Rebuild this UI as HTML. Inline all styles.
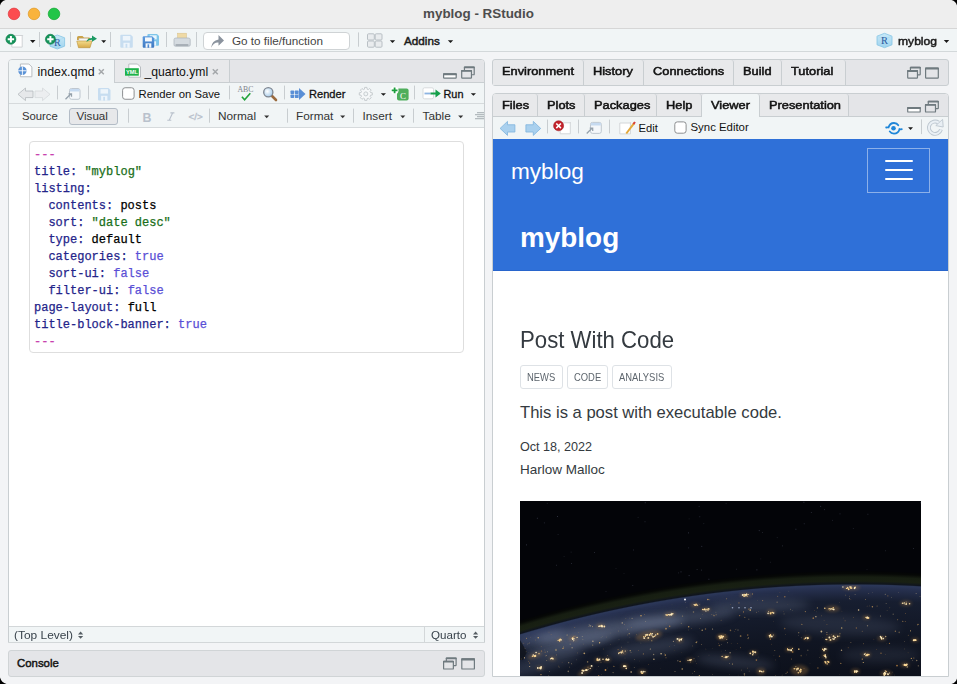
<!DOCTYPE html>
<html><head><meta charset="utf-8">
<style>
*{margin:0;padding:0;box-sizing:border-box}
html,body{width:957px;height:684px;overflow:hidden;background:#f3f4f6;font-family:"Liberation Sans",sans-serif;color:#222}
.a{position:absolute}
.t{position:absolute;white-space:nowrap;line-height:1}
</style></head><body>
<div class="a" style="left:0px;top:0px;width:957px;height:29px;background:#eeeeee;border-bottom:1px solid #d6d6d6"></div>
<div class="t" style="left:0px;top:7px;font-size:13.4px;color:#4d4d4d;font-weight:bold;width:957px;text-align:center">myblog - RStudio</div>
<div class="a" style="left:0px;top:29px;width:957px;height:23px;background:#f1f5f6;border-bottom:1px solid #d3d8da"></div>
<div class="a" style="left:203px;top:32px;width:147px;height:18px;background:#fff;border:1px solid #cfd3d5;border-radius:4px"></div>
<div class="t" style="left:232px;top:35px;font-size:11.7px;color:#444;">Go to file/function</div>
<div class="t" style="left:404px;top:34.5px;font-size:11.7px;color:#1a1a1a;-webkit-text-stroke:0.45px #1a1a1a">Addins</div>
<div class="t" style="left:897.5px;top:36px;font-size:11px;color:#1a1a1a;-webkit-text-stroke:0.45px #1a1a1a;transform:scaleX(1.1);transform-origin:0 0">myblog</div>
<div class="a" style="left:8px;top:59px;width:477px;height:584px;background:#fff;border:1px solid #c9ced1;border-radius:4px 4px 0 0"></div>
<div class="a" style="left:9px;top:60px;width:475px;height:23px;background:#e4e5e8;border-bottom:1px solid #c9ced1;border-radius:3px 3px 0 0"></div>
<div class="a" style="left:9px;top:60px;width:106px;height:23px;background:#f1f5f6;border-right:1px solid #c9ced1;border-radius:3px 0 0 0"></div>
<div class="a" style="left:115px;top:60px;width:115px;height:22px;background:#e8e9eb;border-right:1px solid #c9ced1"></div>
<div class="t" style="left:37.5px;top:65.5px;font-size:12.4px;color:#111;">index.qmd</div>
<div class="t" style="left:144.5px;top:65.5px;font-size:12.2px;color:#111;">_quarto.yml</div>
<div class="a" style="left:9px;top:83px;width:475px;height:21px;background:#f1f5f6;border-bottom:1px solid #d6dadc"></div>
<div class="t" style="left:138.5px;top:88.5px;font-size:11.3px;color:#111;">Render on Save</div>
<div class="t" style="left:309px;top:88.5px;font-size:11.1px;color:#111;-webkit-text-stroke:0.3px #111">Render</div>
<div class="t" style="left:443.5px;top:88.5px;font-size:10.9px;color:#111;-webkit-text-stroke:0.3px #111">Run</div>
<div class="a" style="left:9px;top:104px;width:475px;height:24px;background:#f1f5f6;border-bottom:1px solid #d6dadc"></div>
<div class="t" style="left:22px;top:110.5px;font-size:11.3px;color:#333;">Source</div>
<div class="a" style="left:69px;top:108px;width:49px;height:17px;background:#e7e8ea;border:1px solid #b3bcc6;border-radius:3px"></div>
<div class="t" style="left:76.5px;top:110px;font-size:11.6px;color:#333;">Visual</div>
<div class="t" style="left:218px;top:111px;font-size:11.8px;color:#333;">Normal</div>
<div class="t" style="left:296px;top:111px;font-size:11.8px;color:#333;">Format</div>
<div class="t" style="left:362.5px;top:111px;font-size:11.8px;color:#333;">Insert</div>
<div class="t" style="left:422.5px;top:111px;font-size:11.8px;color:#333;">Table</div>
<div class="t" style="left:142.5px;top:111.5px;font-size:12.4px;color:#b9c1cc;font-weight:bold;">B</div>
<div class="t" style="left:188.5px;top:112px;font-size:9.8px;color:#b9c1cc;-webkit-text-stroke:0.35px #b9c1cc">&lt;/&gt;</div>
<div class="a" style="left:29px;top:141px;width:435px;height:212px;border:1px solid #dedede;border-radius:4px;background:#fff"></div>
<pre class="a" style="left:34px;top:146.5px;font-family:'Liberation Mono',monospace;font-size:12px;line-height:17px;color:#24248a;-webkit-text-stroke:0.25px"><span style="color:#c83fae">---</span>
title: <span style="color:#1a6f1a">"myblog"</span>
listing:
  contents: <span style="color:#000">posts</span>
  sort: <span style="color:#1a6f1a">"date desc"</span>
  type: <span style="color:#000">default</span>
  categories: <span style="color:#5a4fd6">true</span>
  sort-ui: <span style="color:#5a4fd6">false</span>
  filter-ui: <span style="color:#5a4fd6">false</span>
page-layout: <span style="color:#000">full</span>
title-block-banner: <span style="color:#5a4fd6">true</span>
<span style="color:#c83fae">---</span></pre>
<div class="a" style="left:9px;top:626px;width:475px;height:17px;background:#f1f5f6;border-top:1px solid #d3d7d9;border-bottom:1px solid #d3d7d9"></div>
<div class="a" style="left:424px;top:627px;width:1px;height:15px;background:#d3d7d9"></div>
<div class="t" style="left:14px;top:629.8px;font-size:11.1px;color:#39434c;transform:scaleX(1.075);transform-origin:0 0">(Top Level)</div>
<div class="t" style="left:431px;top:630.3px;font-size:10.9px;color:#39434c;transform:scaleX(1.065);transform-origin:0 0">Quarto</div>
<div class="a" style="left:8px;top:650px;width:477px;height:27px;background:#e4e5e8;border:1px solid #d0d4d6;border-radius:3px"></div>
<div class="t" style="left:17px;top:658px;font-size:11.4px;color:#111;-webkit-text-stroke:0.45px #111">Console</div>
<div class="a" style="left:492px;top:59px;width:457px;height:27px;background:#e4e5e8;border:1px solid #c9ced1;border-radius:3px"></div>
<div class="a" style="left:493px;top:60px;width:91px;height:25px;background:#e8e9eb;border-right:1px solid #c9ced1;border-radius:3px 3px 0 0"></div>
<div class="t" style="left:502px;top:65.5px;font-size:11.3px;color:#111;-webkit-text-stroke:0.5px #111;transform:scaleX(1.135);transform-origin:0 0">Environment</div>
<div class="a" style="left:584px;top:60px;width:60px;height:25px;background:#e8e9eb;border-right:1px solid #c9ced1;border-radius:3px 3px 0 0"></div>
<div class="t" style="left:593px;top:65.5px;font-size:11.3px;color:#111;-webkit-text-stroke:0.5px #111;transform:scaleX(1.135);transform-origin:0 0">History</div>
<div class="a" style="left:644px;top:60px;width:90px;height:25px;background:#e8e9eb;border-right:1px solid #c9ced1;border-radius:3px 3px 0 0"></div>
<div class="t" style="left:653px;top:65.5px;font-size:11.3px;color:#111;-webkit-text-stroke:0.5px #111;transform:scaleX(1.135);transform-origin:0 0">Connections</div>
<div class="a" style="left:734px;top:60px;width:48px;height:25px;background:#e8e9eb;border-right:1px solid #c9ced1;border-radius:3px 3px 0 0"></div>
<div class="t" style="left:743px;top:65.5px;font-size:11.3px;color:#111;-webkit-text-stroke:0.5px #111;transform:scaleX(1.135);transform-origin:0 0">Build</div>
<div class="a" style="left:782px;top:60px;width:64px;height:25px;background:#e8e9eb;border-right:1px solid #c9ced1;border-radius:3px 3px 0 0"></div>
<div class="t" style="left:791px;top:65.5px;font-size:11.3px;color:#111;-webkit-text-stroke:0.5px #111;transform:scaleX(1.135);transform-origin:0 0">Tutorial</div>
<div class="a" style="left:492px;top:93px;width:457px;height:584px;background:#fff;border:1px solid #c9ced1;border-radius:4px 4px 0 0;overflow:hidden"></div>
<div class="a" style="left:493px;top:94px;width:455px;height:23px;background:#e4e5e8;border-bottom:1px solid #c9ced1;border-radius:3px 3px 0 0"></div>
<div class="a" style="left:493px;top:94px;width:45px;height:22px;background:#e8e9eb;border-right:1px solid #c9ced1;border-radius:3px 3px 0 0"></div>
<div class="t" style="left:502px;top:99.5px;font-size:11.3px;color:#111;-webkit-text-stroke:0.5px #111;transform:scaleX(1.135);transform-origin:0 0">Files</div>
<div class="a" style="left:538px;top:94px;width:47px;height:22px;background:#e8e9eb;border-right:1px solid #c9ced1;border-radius:3px 3px 0 0"></div>
<div class="t" style="left:547px;top:99.5px;font-size:11.3px;color:#111;-webkit-text-stroke:0.5px #111;transform:scaleX(1.135);transform-origin:0 0">Plots</div>
<div class="a" style="left:585px;top:94px;width:72px;height:22px;background:#e8e9eb;border-right:1px solid #c9ced1;border-radius:3px 3px 0 0"></div>
<div class="t" style="left:594px;top:99.5px;font-size:11.3px;color:#111;-webkit-text-stroke:0.5px #111;transform:scaleX(1.135);transform-origin:0 0">Packages</div>
<div class="a" style="left:657px;top:94px;width:45px;height:22px;background:#e8e9eb;border-right:1px solid #c9ced1;border-radius:3px 3px 0 0"></div>
<div class="t" style="left:666px;top:99.5px;font-size:11.3px;color:#111;-webkit-text-stroke:0.5px #111;transform:scaleX(1.135);transform-origin:0 0">Help</div>
<div class="a" style="left:702px;top:94px;width:58px;height:23px;background:#f1f5f6;border-right:1px solid #c9ced1;border-radius:3px 3px 0 0"></div>
<div class="t" style="left:711px;top:99.5px;font-size:11.3px;color:#111;-webkit-text-stroke:0.5px #111;transform:scaleX(1.135);transform-origin:0 0">Viewer</div>
<div class="a" style="left:760px;top:94px;width:89px;height:22px;background:#e8e9eb;border-right:1px solid #c9ced1;border-radius:3px 3px 0 0"></div>
<div class="t" style="left:769px;top:99.5px;font-size:11.3px;color:#111;-webkit-text-stroke:0.5px #111;transform:scaleX(1.135);transform-origin:0 0">Presentation</div>
<div class="a" style="left:493px;top:117px;width:455px;height:22px;background:#f1f5f6"></div>
<div class="t" style="left:638.5px;top:122.5px;font-size:11.2px;color:#111;">Edit</div>
<div class="t" style="left:690.5px;top:122px;font-size:11.4px;color:#111;">Sync Editor</div>
<div class="a" style="left:493px;top:139px;width:455px;height:132px;background:#2f70d8;border-bottom:1px solid #2865cc"></div>
<div class="t" style="left:511px;top:160.5px;font-size:22.6px;color:#fff;">myblog</div>
<div class="a" style="left:867px;top:148px;width:63px;height:45px;border:1px solid rgba(255,255,255,0.45)"></div>
<div class="a" style="left:885px;top:160.2px;width:28px;height:2.2px;background:#fff;border-radius:1px"></div>
<div class="a" style="left:885px;top:169.2px;width:28px;height:2.2px;background:#fff;border-radius:1px"></div>
<div class="a" style="left:885px;top:178.2px;width:28px;height:2.2px;background:#fff;border-radius:1px"></div>
<div class="t" style="left:520px;top:224px;font-size:27.9px;color:#fff;font-weight:bold;">myblog</div>
<div class="t" style="left:520px;top:328.8px;font-size:23.6px;color:#343a40;transform:scaleX(0.94);transform-origin:0 0">Post With Code</div>
<div class="a" style="left:520px;top:365px;width:43px;height:24px;border:1px solid #dee2e6;border-radius:3px"></div>
<div class="a" style="left:567px;top:365px;width:41px;height:24px;border:1px solid #dee2e6;border-radius:3px"></div>
<div class="a" style="left:612px;top:365px;width:60px;height:24px;border:1px solid #dee2e6;border-radius:3px"></div>
<div class="t" style="left:527px;top:372px;font-size:11.2px;color:#5d656d;transform:scaleX(0.84);transform-origin:0 0">NEWS</div>
<div class="t" style="left:574px;top:372px;font-size:11.2px;color:#5d656d;transform:scaleX(0.84);transform-origin:0 0">CODE</div>
<div class="t" style="left:619px;top:372px;font-size:11.2px;color:#5d656d;transform:scaleX(0.84);transform-origin:0 0">ANALYSIS</div>
<div class="t" style="left:520px;top:405px;font-size:16.6px;color:#343a40;">This is a post with executable code.</div>
<div class="t" style="left:520px;top:440.5px;font-size:12.6px;color:#343a40;">Oct 18, 2022</div>
<div class="t" style="left:520px;top:462.5px;font-size:13.5px;color:#343a40;">Harlow Malloc</div>
<svg class="a" style="left:520px;top:501px" width="401" height="175" viewBox="520 501 401 175">
<defs>
<radialGradient id="glow" cx="854.6" cy="1731" r="1160" gradientUnits="userSpaceOnUse"><stop offset="0.9827586206896551" stop-color="#1c2336"/><stop offset="0.9879310344827587" stop-color="#2a3654"/><stop offset="0.9889655172413794" stop-color="#0f141e"/><stop offset="0.9913793103448276" stop-color="#192013"/><stop offset="0.9948275862068966" stop-color="#171e12"/><stop offset="0.9978448275862069" stop-color="#060806"/><stop offset="1" stop-color="#030406"/></radialGradient>
<radialGradient id="earth" cx="854.6" cy="1731" r="1146" gradientUnits="userSpaceOnUse"><stop offset="0.8987783595113438" stop-color="#0a0d16"/><stop offset="0.9511343804537522" stop-color="#101522"/><stop offset="0.9860383944153578" stop-color="#171e30"/><stop offset="0.9973821989528796" stop-color="#273150"/><stop offset="1" stop-color="#2c385a"/></radialGradient>
<filter id="b1" x="-50%" y="-50%" width="200%" height="200%"><feGaussianBlur stdDeviation="0.7"/></filter>
<filter id="b2" x="-50%" y="-50%" width="200%" height="200%"><feGaussianBlur stdDeviation="1.6"/></filter>
<filter id="b4" x="-50%" y="-50%" width="200%" height="200%"><feGaussianBlur stdDeviation="4"/></filter>
<clipPath id="ec"><circle cx="854.6" cy="1731" r="1146"/></clipPath>
</defs>
<rect x="520" y="501" width="401" height="175" fill="#030408"/>
<rect x="701.4" y="545.9" width="0.8" height="0.8" fill="#44475a"/>
<rect x="701.2" y="569.7" width="0.8" height="0.8" fill="#353845"/>
<rect x="594.0" y="552.2" width="0.8" height="0.8" fill="#353845"/>
<rect x="557.7" y="534.1" width="0.8" height="0.8" fill="#2a2c36"/>
<rect x="736.0" y="568.8" width="0.8" height="0.8" fill="#2a2c36"/>
<rect x="758.8" y="530.3" width="0.8" height="0.8" fill="#44475a"/>
<rect x="782.2" y="545.5" width="0.8" height="0.8" fill="#353845"/>
<rect x="769.9" y="561.8" width="0.8" height="0.8" fill="#2a2c36"/>
<rect x="543.9" y="522.5" width="0.8" height="0.8" fill="#353845"/>
<rect x="760.4" y="558.5" width="0.8" height="0.8" fill="#22242c"/>
<rect x="696.7" y="569.2" width="0.8" height="0.8" fill="#353845"/>
<rect x="776.8" y="537.3" width="0.8" height="0.8" fill="#2a2c36"/>
<rect x="703.4" y="523.3" width="0.8" height="0.8" fill="#2a2c36"/>
<rect x="803.8" y="523.4" width="0.8" height="0.8" fill="#353845"/>
<rect x="725.7" y="503.3" width="0.8" height="0.8" fill="#2a2c36"/>
<rect x="680.6" y="571.5" width="0.8" height="0.8" fill="#44475a"/>
<rect x="546.8" y="502.9" width="0.8" height="0.8" fill="#2a2c36"/>
<rect x="605.6" y="591.3" width="0.8" height="0.8" fill="#2a2c36"/>
<rect x="708.5" y="578.8" width="0.8" height="0.8" fill="#44475a"/>
<rect x="688.3" y="547.5" width="0.8" height="0.8" fill="#353845"/>
<rect x="832.2" y="519.9" width="0.8" height="0.8" fill="#2a2c36"/>
<rect x="644.8" y="502.4" width="0.8" height="0.8" fill="#44475a"/>
<rect x="824.0" y="509.3" width="0.8" height="0.8" fill="#353845"/>
<rect x="803.5" y="501.8" width="0.8" height="0.8" fill="#44475a"/>
<rect x="839.6" y="513.5" width="0.8" height="0.8" fill="#353845"/>
<rect x="699.4" y="516.4" width="0.8" height="0.8" fill="#353845"/>
<rect x="688.1" y="532.5" width="0.8" height="0.8" fill="#44475a"/>
<rect x="688.7" y="518.5" width="0.8" height="0.8" fill="#22242c"/>
<rect x="866.6" y="569.3" width="0.8" height="0.8" fill="#22242c"/>
<rect x="920.2" y="502.4" width="0.8" height="0.8" fill="#353845"/>
<rect x="678.1" y="572.5" width="0.8" height="0.8" fill="#2a2c36"/>
<rect x="536.9" y="517.8" width="0.8" height="0.8" fill="#44475a"/>
<rect x="623.6" y="573.3" width="0.8" height="0.8" fill="#22242c"/>
<rect x="852.9" y="528.0" width="0.8" height="0.8" fill="#2a2c36"/>
<rect x="556.1" y="564.8" width="0.8" height="0.8" fill="#353845"/>
<rect x="526.2" y="544.5" width="0.8" height="0.8" fill="#44475a"/>
<rect x="571.0" y="563.0" width="0.8" height="0.8" fill="#353845"/>
<rect x="867.5" y="513.8" width="0.8" height="0.8" fill="#353845"/>
<rect x="644.6" y="521.4" width="0.8" height="0.8" fill="#353845"/>
<rect x="810.9" y="512.2" width="0.8" height="0.8" fill="#353845"/>
<rect x="795.5" y="528.8" width="0.8" height="0.8" fill="#44475a"/>
<rect x="762.0" y="532.1" width="0.8" height="0.8" fill="#2a2c36"/>
<rect x="563.7" y="556.1" width="0.8" height="0.8" fill="#22242c"/>
<rect x="615.6" y="568.1" width="0.8" height="0.8" fill="#22242c"/>
<rect x="688.7" y="575.3" width="0.8" height="0.8" fill="#44475a"/>
<rect x="637.7" y="516.9" width="0.8" height="0.8" fill="#2a2c36"/>
<rect x="570.7" y="551.7" width="0.8" height="0.8" fill="#2a2c36"/>
<rect x="632.4" y="585.2" width="0.8" height="0.8" fill="#353845"/>
<rect x="820.3" y="505.9" width="0.8" height="0.8" fill="#44475a"/>
<rect x="698.7" y="505.9" width="0.8" height="0.8" fill="#353845"/>
<rect x="633.1" y="549.6" width="0.8" height="0.8" fill="#353845"/>
<rect x="557.0" y="516.1" width="0.8" height="0.8" fill="#44475a"/>
<rect x="913.2" y="548.0" width="0.8" height="0.8" fill="#353845"/>
<rect x="756.5" y="569.5" width="0.8" height="0.8" fill="#44475a"/>
<rect x="885.0" y="550.4" width="0.8" height="0.8" fill="#2a2c36"/>
<circle cx="854.6" cy="1731" r="1160" fill="url(#glow)"/>
<circle cx="854.6" cy="1731" r="1146" fill="url(#earth)"/>
<g clip-path="url(#ec)">
<ellipse cx="610" cy="630" rx="75" ry="8" fill="#8390ae" opacity="0.45" filter="url(#b4)" transform="rotate(-8.0 610 630)"/>
<ellipse cx="570" cy="645" rx="45" ry="6" fill="#8390ae" opacity="0.4" filter="url(#b4)" transform="rotate(-11.5 570 645)"/>
<ellipse cx="680" cy="618" rx="55" ry="7" fill="#8390ae" opacity="0.3" filter="url(#b4)" transform="rotate(-5.7 680 618)"/>
<ellipse cx="760" cy="606" rx="50" ry="6" fill="#8390ae" opacity="0.25" filter="url(#b4)" transform="rotate(-1.7 760 606)"/>
<ellipse cx="650" cy="648" rx="45" ry="8" fill="#8390ae" opacity="0.22" filter="url(#b4)" transform="rotate(-8.6 650 648)"/>
<ellipse cx="840" cy="625" rx="60" ry="10" fill="#8390ae" opacity="0.15" filter="url(#b4)" transform="rotate(2.9 840 625)"/>
<ellipse cx="735" cy="662" rx="40" ry="6" fill="#8390ae" opacity="0.22" filter="url(#b4)" transform="rotate(5.7 735 662)"/>
<ellipse cx="545" cy="662" rx="40" ry="8" fill="#8390ae" opacity="0.2" filter="url(#b4)" transform="rotate(-17.2 545 662)"/>
<ellipse cx="880" cy="655" rx="40" ry="8" fill="#8390ae" opacity="0.12" filter="url(#b4)" transform="rotate(0.0 880 655)"/>
<ellipse cx="540" cy="638" rx="25" ry="5" fill="#8390ae" opacity="0.35" filter="url(#b4)" transform="rotate(-14.3 540 638)"/>
<circle cx="528.5" cy="661.6" r="0.44" fill="#d9974a" opacity="0.69"/>
<circle cx="574.8" cy="627.5" r="0.42" fill="#e8b060" opacity="0.47"/>
<circle cx="881.0" cy="653.2" r="0.60" fill="#d9974a" opacity="0.73"/>
<circle cx="661.1" cy="653.8" r="0.79" fill="#ffdca0" opacity="0.77"/>
<circle cx="898.6" cy="592.5" r="0.45" fill="#ffdca0" opacity="0.26"/>
<circle cx="672.0" cy="604.5" r="0.30" fill="#e8b060" opacity="0.30"/>
<circle cx="918.3" cy="665.8" r="0.62" fill="#ffdca0" opacity="0.48"/>
<circle cx="696.6" cy="663.7" r="0.30" fill="#e8b060" opacity="0.70"/>
<circle cx="644.4" cy="614.4" r="0.30" fill="#e8b060" opacity="0.82"/>
<circle cx="719.4" cy="645.5" r="0.81" fill="#e8b060" opacity="0.40"/>
<circle cx="667.5" cy="614.6" r="0.52" fill="#d9974a" opacity="0.56"/>
<circle cx="784.7" cy="628.6" r="0.78" fill="#d9974a" opacity="0.45"/>
<circle cx="599.6" cy="642.8" r="0.69" fill="#f2c77a" opacity="0.80"/>
<circle cx="674.2" cy="645.7" r="0.36" fill="#ffdca0" opacity="0.33"/>
<circle cx="660.6" cy="668.6" r="0.30" fill="#d9974a" opacity="0.29"/>
<circle cx="849.6" cy="598.8" r="0.43" fill="#ffdca0" opacity="0.81"/>
<circle cx="673.4" cy="641.2" r="0.57" fill="#ffdca0" opacity="0.68"/>
<circle cx="648.5" cy="664.3" r="0.35" fill="#d9974a" opacity="0.61"/>
<circle cx="748.8" cy="619.3" r="0.68" fill="#f2c77a" opacity="0.26"/>
<circle cx="682.5" cy="616.1" r="0.66" fill="#f2c77a" opacity="0.41"/>
<circle cx="839.5" cy="674.6" r="0.31" fill="#d9974a" opacity="0.32"/>
<circle cx="904.3" cy="648.9" r="0.32" fill="#f2c77a" opacity="0.54"/>
<circle cx="806.4" cy="654.9" r="0.47" fill="#f2c77a" opacity="0.27"/>
<circle cx="629.2" cy="633.7" r="0.59" fill="#f2c77a" opacity="0.56"/>
<circle cx="677.8" cy="660.8" r="0.79" fill="#ffdca0" opacity="0.30"/>
<circle cx="572.1" cy="647.8" r="0.53" fill="#ffdca0" opacity="0.80"/>
<circle cx="740.6" cy="647.8" r="0.45" fill="#d9974a" opacity="0.74"/>
<circle cx="705.9" cy="649.0" r="0.33" fill="#e8b060" opacity="0.68"/>
<circle cx="605.5" cy="670.0" r="0.88" fill="#d9974a" opacity="0.84"/>
<circle cx="625.0" cy="658.0" r="0.30" fill="#e8b060" opacity="0.55"/>
<circle cx="696.8" cy="641.8" r="0.65" fill="#e8b060" opacity="0.54"/>
<circle cx="607.5" cy="668.0" r="0.41" fill="#d9974a" opacity="0.27"/>
<circle cx="795.3" cy="668.8" r="0.43" fill="#ffdca0" opacity="0.85"/>
<circle cx="899.2" cy="632.3" r="0.84" fill="#f2c77a" opacity="0.30"/>
<circle cx="696.2" cy="642.5" r="0.71" fill="#f2c77a" opacity="0.59"/>
<circle cx="729.6" cy="663.5" r="0.49" fill="#ffdca0" opacity="0.44"/>
<circle cx="902.9" cy="664.8" r="0.52" fill="#f2c77a" opacity="0.43"/>
<circle cx="908.3" cy="635.2" r="0.50" fill="#e8b060" opacity="0.37"/>
<circle cx="721.8" cy="644.7" r="0.30" fill="#ffdca0" opacity="0.83"/>
<circle cx="738.1" cy="675.1" r="0.31" fill="#f2c77a" opacity="0.31"/>
<circle cx="546.4" cy="655.3" r="0.40" fill="#ffdca0" opacity="0.82"/>
<circle cx="628.0" cy="642.1" r="0.31" fill="#ffdca0" opacity="0.51"/>
<circle cx="730.5" cy="604.5" r="0.41" fill="#d9974a" opacity="0.27"/>
<circle cx="571.9" cy="664.6" r="0.30" fill="#f2c77a" opacity="0.37"/>
<circle cx="524.7" cy="648.4" r="0.61" fill="#ffdca0" opacity="0.40"/>
<circle cx="562.1" cy="662.8" r="0.31" fill="#d9974a" opacity="0.56"/>
<circle cx="807.8" cy="650.3" r="0.76" fill="#ffdca0" opacity="0.26"/>
<circle cx="850.9" cy="642.6" r="0.47" fill="#f2c77a" opacity="0.77"/>
<circle cx="732.4" cy="664.0" r="0.52" fill="#f2c77a" opacity="0.76"/>
<circle cx="886.8" cy="643.8" r="0.37" fill="#d9974a" opacity="0.36"/>
<circle cx="877.1" cy="606.1" r="0.66" fill="#e8b060" opacity="0.37"/>
<circle cx="573.7" cy="636.4" r="0.62" fill="#e8b060" opacity="0.41"/>
<circle cx="694.4" cy="671.5" r="0.48" fill="#f2c77a" opacity="0.67"/>
<circle cx="681.5" cy="652.8" r="0.30" fill="#d9974a" opacity="0.37"/>
<circle cx="885.5" cy="673.3" r="0.31" fill="#d9974a" opacity="0.55"/>
<circle cx="721.6" cy="651.1" r="0.32" fill="#e8b060" opacity="0.29"/>
<circle cx="529.7" cy="666.5" r="0.53" fill="#ffdca0" opacity="0.79"/>
<circle cx="578.8" cy="632.5" r="0.32" fill="#d9974a" opacity="0.75"/>
<circle cx="891.7" cy="597.8" r="0.30" fill="#ffdca0" opacity="0.82"/>
<circle cx="551.1" cy="634.4" r="0.39" fill="#d9974a" opacity="0.51"/>
<circle cx="692.5" cy="645.9" r="0.30" fill="#f2c77a" opacity="0.67"/>
<circle cx="592.7" cy="645.1" r="0.63" fill="#f2c77a" opacity="0.49"/>
<circle cx="762.6" cy="600.6" r="0.68" fill="#e8b060" opacity="0.44"/>
<circle cx="841.5" cy="650.3" r="0.74" fill="#ffdca0" opacity="0.63"/>
<circle cx="748.4" cy="609.6" r="0.51" fill="#d9974a" opacity="0.45"/>
<circle cx="632.1" cy="618.4" r="0.63" fill="#ffdca0" opacity="0.35"/>
<circle cx="573.4" cy="641.2" r="0.47" fill="#ffdca0" opacity="0.47"/>
<circle cx="826.9" cy="624.5" r="0.61" fill="#d9974a" opacity="0.29"/>
<circle cx="641.0" cy="615.8" r="0.77" fill="#e8b060" opacity="0.84"/>
<circle cx="613.1" cy="672.6" r="0.57" fill="#ffdca0" opacity="0.45"/>
<circle cx="748.4" cy="637.7" r="0.39" fill="#f2c77a" opacity="0.85"/>
<circle cx="801.2" cy="655.6" r="0.88" fill="#e8b060" opacity="0.26"/>
<circle cx="816.3" cy="611.8" r="0.40" fill="#f2c77a" opacity="0.28"/>
<circle cx="779.9" cy="592.4" r="0.34" fill="#d9974a" opacity="0.42"/>
<circle cx="740.6" cy="636.0" r="0.86" fill="#e8b060" opacity="0.59"/>
<circle cx="775.8" cy="659.9" r="0.30" fill="#e8b060" opacity="0.61"/>
<circle cx="675.0" cy="671.5" r="0.39" fill="#ffdca0" opacity="0.83"/>
<circle cx="737.3" cy="643.3" r="0.41" fill="#d9974a" opacity="0.55"/>
<circle cx="731.2" cy="643.7" r="0.38" fill="#d9974a" opacity="0.42"/>
<circle cx="744.8" cy="617.4" r="0.61" fill="#e8b060" opacity="0.43"/>
<circle cx="829.8" cy="640.1" r="0.54" fill="#ffdca0" opacity="0.50"/>
<circle cx="541.2" cy="646.3" r="0.39" fill="#d9974a" opacity="0.60"/>
<circle cx="549.5" cy="671.7" r="0.41" fill="#f2c77a" opacity="0.54"/>
<circle cx="538.2" cy="637.7" r="0.69" fill="#f2c77a" opacity="0.80"/>
<circle cx="912.5" cy="660.3" r="0.52" fill="#ffdca0" opacity="0.32"/>
<circle cx="702.7" cy="614.8" r="0.30" fill="#e8b060" opacity="0.57"/>
<circle cx="665.7" cy="614.6" r="0.40" fill="#ffdca0" opacity="0.61"/>
<circle cx="666.0" cy="657.7" r="0.70" fill="#d9974a" opacity="0.33"/>
<circle cx="814.4" cy="610.3" r="0.31" fill="#d9974a" opacity="0.79"/>
<circle cx="630.2" cy="650.7" r="0.62" fill="#f2c77a" opacity="0.67"/>
<circle cx="773.9" cy="655.2" r="0.32" fill="#f2c77a" opacity="0.40"/>
<circle cx="872.4" cy="592.6" r="0.30" fill="#ffdca0" opacity="0.41"/>
<circle cx="530.8" cy="637.2" r="0.33" fill="#e8b060" opacity="0.42"/>
<circle cx="886.1" cy="603.4" r="0.33" fill="#ffdca0" opacity="0.84"/>
<circle cx="711.9" cy="614.4" r="0.37" fill="#e8b060" opacity="0.70"/>
<circle cx="841.7" cy="628.0" r="0.71" fill="#f2c77a" opacity="0.75"/>
<circle cx="698.2" cy="656.7" r="0.39" fill="#f2c77a" opacity="0.34"/>
<circle cx="782.1" cy="675.1" r="0.36" fill="#f2c77a" opacity="0.58"/>
<circle cx="691.5" cy="628.5" r="0.31" fill="#e8b060" opacity="0.78"/>
<circle cx="738.0" cy="630.0" r="0.49" fill="#ffdca0" opacity="0.74"/>
<circle cx="639.8" cy="661.0" r="0.30" fill="#e8b060" opacity="0.38"/>
<circle cx="798.7" cy="632.7" r="0.65" fill="#f2c77a" opacity="0.45"/>
<circle cx="607.7" cy="655.4" r="0.36" fill="#d9974a" opacity="0.79"/>
<circle cx="804.4" cy="639.0" r="0.81" fill="#d9974a" opacity="0.81"/>
<circle cx="695.6" cy="661.0" r="0.36" fill="#ffdca0" opacity="0.44"/>
<circle cx="908.1" cy="652.8" r="0.46" fill="#d9974a" opacity="0.30"/>
<circle cx="529.7" cy="663.1" r="0.51" fill="#d9974a" opacity="0.73"/>
<circle cx="839.6" cy="636.1" r="0.72" fill="#f2c77a" opacity="0.59"/>
<circle cx="556.0" cy="650.1" r="0.74" fill="#f2c77a" opacity="0.74"/>
<circle cx="726.8" cy="639.6" r="0.49" fill="#ffdca0" opacity="0.83"/>
<circle cx="545.7" cy="655.8" r="0.67" fill="#e8b060" opacity="0.30"/>
<circle cx="629.7" cy="618.1" r="0.36" fill="#f2c77a" opacity="0.27"/>
<circle cx="559.1" cy="667.1" r="0.41" fill="#ffdca0" opacity="0.68"/>
<circle cx="826.9" cy="634.5" r="0.65" fill="#d9974a" opacity="0.49"/>
<circle cx="843.7" cy="618.0" r="0.31" fill="#e8b060" opacity="0.54"/>
<circle cx="804.0" cy="668.7" r="0.40" fill="#d9974a" opacity="0.75"/>
<circle cx="862.3" cy="659.1" r="0.72" fill="#e8b060" opacity="0.78"/>
<circle cx="730.1" cy="652.7" r="0.69" fill="#ffdca0" opacity="0.50"/>
<circle cx="887.1" cy="610.7" r="0.32" fill="#f2c77a" opacity="0.63"/>
<circle cx="648.7" cy="634.3" r="0.47" fill="#e8b060" opacity="0.41"/>
<circle cx="709.0" cy="655.1" r="0.36" fill="#f2c77a" opacity="0.34"/>
<circle cx="885.8" cy="654.6" r="0.30" fill="#e8b060" opacity="0.54"/>
<circle cx="645.3" cy="621.7" r="0.38" fill="#ffdca0" opacity="0.60"/>
<circle cx="758.5" cy="611.6" r="0.32" fill="#f2c77a" opacity="0.42"/>
<circle cx="885.2" cy="670.6" r="0.54" fill="#ffdca0" opacity="0.82"/>
<circle cx="862.2" cy="631.2" r="0.40" fill="#e8b060" opacity="0.82"/>
<circle cx="713.5" cy="615.0" r="0.30" fill="#ffdca0" opacity="0.82"/>
<circle cx="911.4" cy="658.4" r="0.66" fill="#e8b060" opacity="0.72"/>
<circle cx="783.7" cy="611.3" r="0.30" fill="#d9974a" opacity="0.53"/>
<circle cx="700.5" cy="618.3" r="0.41" fill="#ffdca0" opacity="0.77"/>
<circle cx="582.9" cy="639.2" r="0.34" fill="#f2c77a" opacity="0.77"/>
<circle cx="775.4" cy="675.4" r="0.34" fill="#f2c77a" opacity="0.57"/>
<circle cx="749.3" cy="608.5" r="0.33" fill="#f2c77a" opacity="0.80"/>
<circle cx="849.7" cy="596.2" r="0.34" fill="#e8b060" opacity="0.68"/>
<circle cx="876.8" cy="649.4" r="0.30" fill="#d9974a" opacity="0.70"/>
<circle cx="527.6" cy="644.0" r="0.32" fill="#ffdca0" opacity="0.66"/>
<circle cx="603.6" cy="649.0" r="0.47" fill="#d9974a" opacity="0.34"/>
<circle cx="646.8" cy="635.6" r="0.49" fill="#e8b060" opacity="0.85"/>
<circle cx="664.2" cy="653.8" r="0.31" fill="#ffdca0" opacity="0.49"/>
<circle cx="819.4" cy="657.4" r="0.31" fill="#ffdca0" opacity="0.52"/>
<circle cx="805.4" cy="630.9" r="0.35" fill="#e8b060" opacity="0.32"/>
<circle cx="863.3" cy="662.5" r="0.61" fill="#f2c77a" opacity="0.79"/>
<circle cx="636.4" cy="634.8" r="0.47" fill="#d9974a" opacity="0.43"/>
<circle cx="822.7" cy="637.5" r="0.30" fill="#ffdca0" opacity="0.36"/>
<circle cx="813.3" cy="618.2" r="0.84" fill="#d9974a" opacity="0.59"/>
<circle cx="699.2" cy="628.8" r="0.31" fill="#f2c77a" opacity="0.62"/>
<circle cx="791.8" cy="651.1" r="0.32" fill="#ffdca0" opacity="0.49"/>
<circle cx="757.7" cy="600.6" r="0.33" fill="#e8b060" opacity="0.34"/>
<circle cx="694.0" cy="658.7" r="0.37" fill="#f2c77a" opacity="0.74"/>
<circle cx="779.5" cy="656.3" r="0.70" fill="#d9974a" opacity="0.48"/>
<circle cx="889.5" cy="643.4" r="0.62" fill="#d9974a" opacity="0.62"/>
<circle cx="913.8" cy="658.0" r="0.56" fill="#e8b060" opacity="0.62"/>
<circle cx="624.5" cy="624.3" r="0.36" fill="#ffdca0" opacity="0.51"/>
<circle cx="602.2" cy="636.7" r="0.35" fill="#f2c77a" opacity="0.31"/>
<circle cx="621.8" cy="646.9" r="0.35" fill="#f2c77a" opacity="0.39"/>
<circle cx="750.2" cy="610.1" r="0.82" fill="#f2c77a" opacity="0.85"/>
<circle cx="747.5" cy="596.2" r="0.56" fill="#f2c77a" opacity="0.72"/>
<circle cx="618.1" cy="649.6" r="0.59" fill="#d9974a" opacity="0.45"/>
<circle cx="626.7" cy="668.5" r="0.42" fill="#f2c77a" opacity="0.69"/>
<circle cx="882.5" cy="636.4" r="0.49" fill="#d9974a" opacity="0.59"/>
<circle cx="587.6" cy="661.9" r="0.78" fill="#f2c77a" opacity="0.45"/>
<circle cx="569.2" cy="667.1" r="0.35" fill="#f2c77a" opacity="0.79"/>
<circle cx="824.1" cy="620.8" r="0.32" fill="#e8b060" opacity="0.61"/>
<circle cx="702.2" cy="630.2" r="0.67" fill="#f2c77a" opacity="0.81"/>
<circle cx="643.4" cy="653.9" r="0.63" fill="#e8b060" opacity="0.48"/>
<circle cx="583.6" cy="644.0" r="0.30" fill="#e8b060" opacity="0.57"/>
<circle cx="748.4" cy="608.2" r="0.46" fill="#d9974a" opacity="0.41"/>
<circle cx="541.4" cy="666.6" r="0.61" fill="#ffdca0" opacity="0.72"/>
<circle cx="904.7" cy="641.6" r="0.43" fill="#ffdca0" opacity="0.50"/>
<circle cx="821.4" cy="631.5" r="0.89" fill="#ffdca0" opacity="0.75"/>
<circle cx="850.9" cy="599.2" r="0.31" fill="#d9974a" opacity="0.81"/>
<circle cx="730.5" cy="630.4" r="0.79" fill="#e8b060" opacity="0.44"/>
<circle cx="638.7" cy="650.5" r="0.41" fill="#d9974a" opacity="0.48"/>
<circle cx="821.5" cy="615.8" r="0.51" fill="#e8b060" opacity="0.29"/>
<circle cx="858.6" cy="610.1" r="0.76" fill="#ffdca0" opacity="0.83"/>
<circle cx="798.7" cy="635.4" r="0.33" fill="#ffdca0" opacity="0.43"/>
<circle cx="897.0" cy="665.6" r="0.90" fill="#d9974a" opacity="0.69"/>
<circle cx="867.5" cy="625.7" r="0.69" fill="#ffdca0" opacity="0.38"/>
<circle cx="747.3" cy="668.1" r="0.31" fill="#e8b060" opacity="0.73"/>
<circle cx="873.8" cy="639.2" r="0.42" fill="#d9974a" opacity="0.43"/>
<circle cx="529.6" cy="642.9" r="0.42" fill="#ffdca0" opacity="0.52"/>
<circle cx="576.7" cy="659.8" r="0.33" fill="#ffdca0" opacity="0.43"/>
<circle cx="880.3" cy="616.0" r="0.45" fill="#ffdca0" opacity="0.81"/>
<circle cx="872.4" cy="606.7" r="0.74" fill="#e8b060" opacity="0.67"/>
<circle cx="598.4" cy="666.6" r="0.38" fill="#f2c77a" opacity="0.53"/>
<circle cx="774.8" cy="650.6" r="0.49" fill="#f2c77a" opacity="0.57"/>
<circle cx="596.8" cy="669.1" r="0.30" fill="#d9974a" opacity="0.31"/>
<circle cx="905.5" cy="613.6" r="0.41" fill="#d9974a" opacity="0.78"/>
<circle cx="799.1" cy="670.7" r="0.42" fill="#f2c77a" opacity="0.30"/>
<circle cx="865.5" cy="599.5" r="0.59" fill="#f2c77a" opacity="0.41"/>
<circle cx="721.1" cy="620.2" r="0.34" fill="#e8b060" opacity="0.73"/>
<circle cx="756.6" cy="612.2" r="0.35" fill="#f2c77a" opacity="0.81"/>
<circle cx="631.0" cy="652.6" r="0.30" fill="#ffdca0" opacity="0.84"/>
<circle cx="887.8" cy="595.9" r="0.79" fill="#d9974a" opacity="0.25"/>
<circle cx="735.4" cy="629.4" r="0.49" fill="#f2c77a" opacity="0.35"/>
<circle cx="618.6" cy="631.0" r="0.48" fill="#f2c77a" opacity="0.36"/>
<circle cx="916.1" cy="593.5" r="0.43" fill="#ffdca0" opacity="0.70"/>
<circle cx="521.1" cy="671.9" r="0.30" fill="#d9974a" opacity="0.29"/>
<circle cx="648.6" cy="640.7" r="0.30" fill="#f2c77a" opacity="0.42"/>
<circle cx="758.1" cy="657.0" r="0.31" fill="#ffdca0" opacity="0.51"/>
<circle cx="739.7" cy="615.6" r="0.61" fill="#d9974a" opacity="0.68"/>
<circle cx="716.1" cy="614.8" r="0.50" fill="#e8b060" opacity="0.55"/>
<circle cx="601.2" cy="674.3" r="0.30" fill="#f2c77a" opacity="0.52"/>
<circle cx="650.3" cy="649.1" r="0.52" fill="#ffdca0" opacity="0.73"/>
<circle cx="810.0" cy="663.7" r="0.30" fill="#f2c77a" opacity="0.32"/>
<circle cx="748.1" cy="638.5" r="0.68" fill="#f2c77a" opacity="0.39"/>
<circle cx="541.6" cy="651.0" r="0.59" fill="#d9974a" opacity="0.74"/>
<circle cx="826.9" cy="632.5" r="0.55" fill="#ffdca0" opacity="0.56"/>
<circle cx="622.2" cy="622.9" r="0.59" fill="#ffdca0" opacity="0.75"/>
<circle cx="544.5" cy="649.9" r="0.38" fill="#e8b060" opacity="0.38"/>
<circle cx="571.5" cy="663.4" r="0.52" fill="#ffdca0" opacity="0.33"/>
<circle cx="729.2" cy="674.8" r="0.30" fill="#f2c77a" opacity="0.50"/>
<circle cx="556.7" cy="654.9" r="0.43" fill="#e8b060" opacity="0.81"/>
<circle cx="792.6" cy="651.9" r="0.87" fill="#d9974a" opacity="0.62"/>
<circle cx="621.5" cy="647.7" r="0.34" fill="#f2c77a" opacity="0.53"/>
<circle cx="666.0" cy="628.7" r="0.88" fill="#e8b060" opacity="0.62"/>
<circle cx="584.3" cy="653.3" r="0.89" fill="#f2c77a" opacity="0.69"/>
<circle cx="705.5" cy="629.1" r="0.73" fill="#e8b060" opacity="0.48"/>
<circle cx="606.4" cy="637.0" r="0.32" fill="#f2c77a" opacity="0.58"/>
<circle cx="712.6" cy="629.1" r="0.51" fill="#ffdca0" opacity="0.71"/>
<circle cx="699.3" cy="675.5" r="0.58" fill="#f2c77a" opacity="0.77"/>
<circle cx="736.7" cy="629.0" r="0.30" fill="#d9974a" opacity="0.42"/>
<circle cx="769.0" cy="635.7" r="0.63" fill="#f2c77a" opacity="0.56"/>
<circle cx="627.7" cy="634.9" r="0.31" fill="#d9974a" opacity="0.81"/>
<circle cx="575.0" cy="636.3" r="0.72" fill="#d9974a" opacity="0.32"/>
<circle cx="856.4" cy="628.1" r="0.74" fill="#d9974a" opacity="0.48"/>
<circle cx="829.1" cy="634.3" r="0.30" fill="#f2c77a" opacity="0.49"/>
<circle cx="715.9" cy="612.2" r="0.46" fill="#f2c77a" opacity="0.33"/>
<circle cx="645.2" cy="637.0" r="0.48" fill="#d9974a" opacity="0.33"/>
<circle cx="645.9" cy="638.8" r="0.39" fill="#d9974a" opacity="0.78"/>
<circle cx="734.5" cy="631.6" r="0.31" fill="#d9974a" opacity="0.56"/>
<circle cx="610.6" cy="633.0" r="0.37" fill="#e8b060" opacity="0.38"/>
<circle cx="860.1" cy="654.0" r="0.44" fill="#d9974a" opacity="0.26"/>
<circle cx="784.8" cy="596.8" r="0.74" fill="#d9974a" opacity="0.58"/>
<circle cx="787.3" cy="672.2" r="0.75" fill="#d9974a" opacity="0.39"/>
<circle cx="556.0" cy="648.9" r="0.39" fill="#ffdca0" opacity="0.29"/>
<circle cx="893.2" cy="614.2" r="0.60" fill="#ffdca0" opacity="0.38"/>
<circle cx="601.0" cy="662.4" r="0.37" fill="#e8b060" opacity="0.68"/>
<circle cx="817.9" cy="668.0" r="0.69" fill="#d9974a" opacity="0.54"/>
<circle cx="801.3" cy="637.7" r="0.59" fill="#ffdca0" opacity="0.26"/>
<circle cx="568.3" cy="671.4" r="0.80" fill="#ffdca0" opacity="0.41"/>
<circle cx="718.7" cy="643.3" r="0.43" fill="#d9974a" opacity="0.45"/>
<circle cx="549.0" cy="632.1" r="0.36" fill="#d9974a" opacity="0.47"/>
<circle cx="625.0" cy="654.8" r="0.32" fill="#d9974a" opacity="0.53"/>
<circle cx="902.8" cy="621.2" r="0.50" fill="#e8b060" opacity="0.82"/>
<circle cx="771.6" cy="644.2" r="0.40" fill="#d9974a" opacity="0.50"/>
<circle cx="547.4" cy="651.8" r="0.42" fill="#ffdca0" opacity="0.83"/>
<circle cx="535.3" cy="640.0" r="0.45" fill="#d9974a" opacity="0.44"/>
<circle cx="709.7" cy="599.8" r="0.52" fill="#d9974a" opacity="0.41"/>
<circle cx="792.7" cy="610.7" r="0.30" fill="#ffdca0" opacity="0.58"/>
<circle cx="521.4" cy="659.0" r="0.73" fill="#e8b060" opacity="0.71"/>
<circle cx="770.4" cy="639.1" r="0.71" fill="#d9974a" opacity="0.83"/>
<circle cx="625.9" cy="618.7" r="0.30" fill="#f2c77a" opacity="0.73"/>
<circle cx="798.8" cy="649.2" r="0.86" fill="#f2c77a" opacity="0.74"/>
<circle cx="653.6" cy="654.5" r="0.69" fill="#ffdca0" opacity="0.43"/>
<circle cx="634.6" cy="659.5" r="0.47" fill="#f2c77a" opacity="0.39"/>
<circle cx="665.3" cy="655.1" r="0.81" fill="#e8b060" opacity="0.69"/>
<circle cx="916.7" cy="660.5" r="0.77" fill="#ffdca0" opacity="0.44"/>
<circle cx="725.5" cy="650.4" r="0.30" fill="#ffdca0" opacity="0.62"/>
<circle cx="868.8" cy="593.7" r="0.34" fill="#ffdca0" opacity="0.55"/>
<circle cx="621.4" cy="653.0" r="0.38" fill="#f2c77a" opacity="0.66"/>
<circle cx="653.9" cy="659.3" r="0.73" fill="#ffdca0" opacity="0.75"/>
<circle cx="777.1" cy="602.2" r="0.63" fill="#f2c77a" opacity="0.41"/>
<circle cx="570.2" cy="644.1" r="0.57" fill="#f2c77a" opacity="0.39"/>
<circle cx="910.5" cy="630.8" r="0.59" fill="#f2c77a" opacity="0.72"/>
<circle cx="627.5" cy="629.2" r="0.34" fill="#ffdca0" opacity="0.65"/>
<circle cx="894.3" cy="675.0" r="0.30" fill="#e8b060" opacity="0.68"/>
<circle cx="869.2" cy="605.9" r="0.38" fill="#e8b060" opacity="0.57"/>
<circle cx="682.2" cy="669.0" r="0.72" fill="#f2c77a" opacity="0.76"/>
<circle cx="669.7" cy="626.3" r="0.68" fill="#d9974a" opacity="0.75"/>
<circle cx="609.7" cy="659.2" r="0.40" fill="#ffdca0" opacity="0.34"/>
<circle cx="790.7" cy="609.2" r="0.35" fill="#ffdca0" opacity="0.77"/>
<circle cx="590.2" cy="625.9" r="0.82" fill="#ffdca0" opacity="0.40"/>
<circle cx="693.5" cy="611.9" r="0.77" fill="#f2c77a" opacity="0.41"/>
<circle cx="629.8" cy="637.2" r="0.36" fill="#f2c77a" opacity="0.30"/>
<circle cx="666.7" cy="623.1" r="0.30" fill="#d9974a" opacity="0.29"/>
<circle cx="788.8" cy="591.2" r="0.37" fill="#f2c77a" opacity="0.33"/>
<circle cx="917.6" cy="625.6" r="0.30" fill="#ffdca0" opacity="0.46"/>
<circle cx="743.5" cy="611.9" r="0.53" fill="#d9974a" opacity="0.75"/>
<circle cx="631.1" cy="672.0" r="0.75" fill="#ffdca0" opacity="0.85"/>
<circle cx="749.1" cy="671.1" r="0.30" fill="#f2c77a" opacity="0.76"/>
<circle cx="736.1" cy="649.7" r="0.34" fill="#d9974a" opacity="0.26"/>
<circle cx="545.2" cy="652.3" r="0.77" fill="#d9974a" opacity="0.29"/>
<circle cx="524.4" cy="657.8" r="0.69" fill="#ffdca0" opacity="0.73"/>
<circle cx="680.1" cy="661.5" r="0.71" fill="#e8b060" opacity="0.71"/>
<circle cx="895.4" cy="631.3" r="0.72" fill="#e8b060" opacity="0.50"/>
<circle cx="523.8" cy="643.2" r="0.36" fill="#d9974a" opacity="0.68"/>
<circle cx="845.1" cy="620.8" r="0.54" fill="#d9974a" opacity="0.46"/>
<circle cx="546.7" cy="660.4" r="0.51" fill="#f2c77a" opacity="0.41"/>
<circle cx="817.4" cy="607.9" r="0.63" fill="#f2c77a" opacity="0.58"/>
<circle cx="591.1" cy="625.7" r="0.31" fill="#ffdca0" opacity="0.46"/>
<circle cx="528.8" cy="652.2" r="0.30" fill="#f2c77a" opacity="0.31"/>
<circle cx="528.3" cy="643.3" r="0.30" fill="#d9974a" opacity="0.60"/>
<circle cx="692.5" cy="673.2" r="0.33" fill="#f2c77a" opacity="0.49"/>
<circle cx="845.8" cy="595.1" r="0.39" fill="#f2c77a" opacity="0.80"/>
<circle cx="831.8" cy="634.8" r="0.30" fill="#ffdca0" opacity="0.69"/>
<circle cx="885.3" cy="594.2" r="0.53" fill="#ffdca0" opacity="0.46"/>
<circle cx="863.4" cy="643.7" r="0.45" fill="#e8b060" opacity="0.59"/>
<circle cx="568.7" cy="662.7" r="0.63" fill="#ffdca0" opacity="0.51"/>
<circle cx="688.2" cy="629.9" r="0.33" fill="#e8b060" opacity="0.61"/>
<circle cx="726.6" cy="598.7" r="0.54" fill="#e8b060" opacity="0.52"/>
<circle cx="758.4" cy="670.3" r="0.31" fill="#d9974a" opacity="0.53"/>
<circle cx="815.9" cy="616.7" r="0.63" fill="#ffdca0" opacity="0.84"/>
<circle cx="541.0" cy="674.6" r="0.64" fill="#e8b060" opacity="0.79"/>
<circle cx="613.9" cy="666.2" r="0.55" fill="#e8b060" opacity="0.81"/>
<circle cx="839.9" cy="633.6" r="0.89" fill="#e8b060" opacity="0.29"/>
<circle cx="805.4" cy="611.6" r="0.69" fill="#e8b060" opacity="0.52"/>
<circle cx="867.1" cy="606.1" r="0.35" fill="#e8b060" opacity="0.64"/>
<circle cx="563.0" cy="648.4" r="0.64" fill="#e8b060" opacity="0.78"/>
<circle cx="840.8" cy="663.4" r="0.66" fill="#e8b060" opacity="0.58"/>
<circle cx="839.5" cy="602.3" r="0.38" fill="#e8b060" opacity="0.31"/>
<circle cx="892.5" cy="672.1" r="0.33" fill="#ffdca0" opacity="0.42"/>
<circle cx="592.9" cy="641.3" r="0.73" fill="#ffdca0" opacity="0.62"/>
<circle cx="548.8" cy="675.4" r="0.33" fill="#f2c77a" opacity="0.63"/>
<circle cx="744.5" cy="675.5" r="0.39" fill="#d9974a" opacity="0.74"/>
<circle cx="858.7" cy="671.3" r="0.56" fill="#f2c77a" opacity="0.38"/>
<circle cx="592.5" cy="626.6" r="0.59" fill="#f2c77a" opacity="0.53"/>
<circle cx="631.6" cy="627.7" r="0.37" fill="#d9974a" opacity="0.62"/>
<circle cx="598.7" cy="675.7" r="0.59" fill="#d9974a" opacity="0.69"/>
<circle cx="869.0" cy="656.0" r="0.32" fill="#d9974a" opacity="0.29"/>
<circle cx="690.3" cy="662.5" r="0.40" fill="#e8b060" opacity="0.52"/>
<circle cx="897.6" cy="619.7" r="0.60" fill="#e8b060" opacity="0.39"/>
<circle cx="634.2" cy="667.6" r="0.35" fill="#ffdca0" opacity="0.76"/>
<circle cx="610.5" cy="644.3" r="0.32" fill="#f2c77a" opacity="0.50"/>
<circle cx="699.8" cy="604.4" r="0.41" fill="#ffdca0" opacity="0.42"/>
<circle cx="784.1" cy="613.9" r="0.56" fill="#f2c77a" opacity="0.26"/>
<circle cx="526.1" cy="651.7" r="0.51" fill="#ffdca0" opacity="0.77"/>
<circle cx="688.7" cy="626.7" r="0.70" fill="#e8b060" opacity="0.76"/>
<circle cx="738.9" cy="602.9" r="0.78" fill="#d9974a" opacity="0.30"/>
<circle cx="526.5" cy="638.2" r="0.51" fill="#e8b060" opacity="0.67"/>
<circle cx="787.9" cy="604.2" r="0.30" fill="#d9974a" opacity="0.35"/>
<circle cx="712.3" cy="648.8" r="0.30" fill="#e8b060" opacity="0.38"/>
<circle cx="918.0" cy="624.4" r="0.71" fill="#e8b060" opacity="0.64"/>
<circle cx="920.0" cy="596.5" r="0.43" fill="#f2c77a" opacity="0.49"/>
<circle cx="727.7" cy="642.8" r="0.45" fill="#ffdca0" opacity="0.75"/>
<circle cx="558.5" cy="666.1" r="0.30" fill="#d9974a" opacity="0.83"/>
<circle cx="786.0" cy="673.4" r="0.43" fill="#ffdca0" opacity="0.78"/>
<circle cx="707.9" cy="599.6" r="0.74" fill="#e8b060" opacity="0.82"/>
<circle cx="563.7" cy="647.0" r="0.49" fill="#e8b060" opacity="0.83"/>
<circle cx="640.9" cy="643.0" r="0.31" fill="#f2c77a" opacity="0.59"/>
<circle cx="785.7" cy="634.4" r="0.36" fill="#f2c77a" opacity="0.46"/>
<circle cx="619.0" cy="639.4" r="0.30" fill="#ffdca0" opacity="0.38"/>
<circle cx="588.2" cy="626.2" r="0.31" fill="#f2c77a" opacity="0.79"/>
<circle cx="577.7" cy="652.9" r="0.32" fill="#e8b060" opacity="0.62"/>
<circle cx="685.8" cy="602.3" r="0.31" fill="#ffdca0" opacity="0.74"/>
<circle cx="582.8" cy="650.5" r="0.30" fill="#d9974a" opacity="0.32"/>
<circle cx="885.7" cy="636.5" r="0.65" fill="#ffdca0" opacity="0.72"/>
<circle cx="686.9" cy="607.2" r="0.34" fill="#ffdca0" opacity="0.32"/>
<circle cx="651.8" cy="640.8" r="0.56" fill="#f2c77a" opacity="0.78"/>
<circle cx="747.7" cy="635.1" r="0.79" fill="#d9974a" opacity="0.49"/>
<circle cx="627.2" cy="650.3" r="0.33" fill="#ffdca0" opacity="0.30"/>
<circle cx="674.2" cy="650.5" r="0.37" fill="#d9974a" opacity="0.32"/>
<circle cx="855.1" cy="594.4" r="0.47" fill="#ffdca0" opacity="0.58"/>
<circle cx="848.3" cy="647.7" r="0.61" fill="#d9974a" opacity="0.27"/>
<circle cx="714.1" cy="615.7" r="0.64" fill="#e8b060" opacity="0.54"/>
<circle cx="669.7" cy="646.7" r="0.31" fill="#d9974a" opacity="0.66"/>
<circle cx="905.3" cy="621.5" r="0.51" fill="#d9974a" opacity="0.47"/>
<circle cx="604.1" cy="661.9" r="0.30" fill="#e8b060" opacity="0.36"/>
<circle cx="727.0" cy="656.3" r="0.30" fill="#d9974a" opacity="0.31"/>
<circle cx="756.4" cy="660.1" r="0.83" fill="#d9974a" opacity="0.64"/>
<circle cx="681.3" cy="623.3" r="0.58" fill="#f2c77a" opacity="0.30"/>
<circle cx="853.4" cy="617.6" r="0.36" fill="#d9974a" opacity="0.74"/>
<circle cx="777.6" cy="596.4" r="0.65" fill="#e8b060" opacity="0.28"/>
<circle cx="741.4" cy="670.1" r="0.54" fill="#f2c77a" opacity="0.26"/>
<circle cx="752.5" cy="594.0" r="0.63" fill="#e8b060" opacity="0.50"/>
<circle cx="589.2" cy="624.8" r="0.58" fill="#ffdca0" opacity="0.33"/>
<circle cx="791.6" cy="659.0" r="0.42" fill="#e8b060" opacity="0.79"/>
<circle cx="855.0" cy="672.2" r="0.38" fill="#e8b060" opacity="0.75"/>
<circle cx="801.9" cy="624.3" r="0.59" fill="#e8b060" opacity="0.64"/>
<circle cx="889.8" cy="607.8" r="0.40" fill="#e8b060" opacity="0.57"/>
<circle cx="582.2" cy="636.7" r="0.40" fill="#ffdca0" opacity="0.79"/>
<circle cx="600.3" cy="658.6" r="0.45" fill="#ffdca0" opacity="0.51"/>
<circle cx="725.1" cy="634.7" r="0.48" fill="#d9974a" opacity="0.76"/>
<circle cx="601.1" cy="637.7" r="0.32" fill="#ffdca0" opacity="0.46"/>
<circle cx="701.6" cy="644.4" r="0.43" fill="#f2c77a" opacity="0.71"/>
<circle cx="712.7" cy="674.5" r="0.36" fill="#f2c77a" opacity="0.67"/>
<circle cx="773.6" cy="621.4" r="0.40" fill="#e8b060" opacity="0.28"/>
<circle cx="841.9" cy="611.2" r="0.34" fill="#e8b060" opacity="0.38"/>
<circle cx="744.4" cy="674.0" r="0.80" fill="#ffdca0" opacity="0.52"/>
<circle cx="567.1" cy="635.0" r="0.53" fill="#f2c77a" opacity="0.66"/>
<ellipse cx="648.9" cy="635.7" rx="13.5" ry="4.7" fill="#c89048" opacity="0.28" filter="url(#b2)" transform="rotate(-10 648.9 635.7)"/>
<circle cx="655.7" cy="635.0" r="0.76" fill="#fff0c8" opacity="0.95"/>
<circle cx="643.8" cy="636.7" r="0.70" fill="#ffd488" opacity="0.95"/>
<circle cx="649.5" cy="635.0" r="0.88" fill="#ffe2a8" opacity="0.95"/>
<circle cx="657.6" cy="633.9" r="0.86" fill="#ffd488" opacity="0.95"/>
<circle cx="654.6" cy="636.2" r="0.77" fill="#ffd488" opacity="0.95"/>
<circle cx="647.1" cy="634.8" r="0.97" fill="#fff0c8" opacity="0.95"/>
<circle cx="650.7" cy="633.7" r="0.91" fill="#ffd488" opacity="0.95"/>
<circle cx="652.2" cy="635.9" r="0.54" fill="#ffd488" opacity="0.95"/>
<circle cx="646.9" cy="635.1" r="0.76" fill="#ffd488" opacity="0.95"/>
<circle cx="645.4" cy="636.4" r="0.61" fill="#ffd488" opacity="0.95"/>
<circle cx="651.2" cy="635.0" r="0.66" fill="#fff0c8" opacity="0.95"/>
<circle cx="652.4" cy="633.7" r="0.75" fill="#fff0c8" opacity="0.95"/>
<circle cx="653.1" cy="636.8" r="0.84" fill="#fff0c8" opacity="0.95"/>
<circle cx="649.3" cy="634.6" r="0.48" fill="#ffd488" opacity="0.95"/>
<circle cx="645.5" cy="635.0" r="0.71" fill="#fff0c8" opacity="0.95"/>
<circle cx="644.2" cy="638.1" r="0.97" fill="#fff0c8" opacity="0.95"/>
<circle cx="648.3" cy="637.9" r="0.94" fill="#ffe2a8" opacity="0.95"/>
<ellipse cx="585.2" cy="670.8" rx="9.0" ry="2.9" fill="#c89048" opacity="0.28" filter="url(#b2)" transform="rotate(-35 585.2 670.8)"/>
<circle cx="586.3" cy="669.9" r="0.97" fill="#fff0c8" opacity="0.95"/>
<circle cx="584.7" cy="670.3" r="0.45" fill="#fff0c8" opacity="0.95"/>
<circle cx="586.7" cy="669.6" r="0.65" fill="#ffd488" opacity="0.95"/>
<circle cx="585.7" cy="670.2" r="0.82" fill="#ffe2a8" opacity="0.95"/>
<circle cx="587.2" cy="670.2" r="0.53" fill="#fff0c8" opacity="0.95"/>
<circle cx="591.6" cy="665.9" r="0.96" fill="#fff0c8" opacity="0.95"/>
<circle cx="588.1" cy="669.3" r="0.55" fill="#fff0c8" opacity="0.95"/>
<circle cx="583.5" cy="670.8" r="0.96" fill="#fff0c8" opacity="0.95"/>
<circle cx="586.4" cy="670.3" r="0.56" fill="#fff0c8" opacity="0.95"/>
<circle cx="582.1" cy="673.1" r="0.98" fill="#fff0c8" opacity="0.95"/>
<circle cx="590.2" cy="668.4" r="0.59" fill="#ffe2a8" opacity="0.95"/>
<circle cx="582.4" cy="670.5" r="0.99" fill="#ffe2a8" opacity="0.95"/>
<circle cx="588.0" cy="667.1" r="0.46" fill="#ffd488" opacity="0.95"/>
<ellipse cx="534.7" cy="655.5" rx="7.5" ry="2.7" fill="#c89048" opacity="0.28" filter="url(#b2)" transform="rotate(-20 534.7 655.5)"/>
<circle cx="536.1" cy="652.4" r="0.76" fill="#fff0c8" opacity="0.95"/>
<circle cx="534.3" cy="656.1" r="0.87" fill="#ffe2a8" opacity="0.95"/>
<circle cx="535.3" cy="655.2" r="0.51" fill="#ffd488" opacity="0.95"/>
<circle cx="535.2" cy="655.3" r="0.47" fill="#ffe2a8" opacity="0.95"/>
<circle cx="533.3" cy="655.1" r="0.77" fill="#fff0c8" opacity="0.95"/>
<circle cx="534.7" cy="655.5" r="0.49" fill="#ffe2a8" opacity="0.95"/>
<circle cx="539.0" cy="653.7" r="0.67" fill="#ffd488" opacity="0.95"/>
<circle cx="535.4" cy="656.0" r="0.94" fill="#ffe2a8" opacity="0.95"/>
<circle cx="534.8" cy="656.5" r="0.74" fill="#ffd488" opacity="0.95"/>
<circle cx="532.5" cy="656.2" r="0.81" fill="#ffd488" opacity="0.95"/>
<circle cx="535.4" cy="655.6" r="0.59" fill="#ffd488" opacity="0.95"/>
<ellipse cx="573.2" cy="638.6" rx="4.5" ry="2.7" fill="#c89048" opacity="0.28" filter="url(#b2)" transform="rotate(0 573.2 638.6)"/>
<circle cx="573.8" cy="640.3" r="0.55" fill="#fff0c8" opacity="0.95"/>
<circle cx="572.5" cy="638.1" r="0.74" fill="#ffd488" opacity="0.95"/>
<circle cx="572.9" cy="638.5" r="0.62" fill="#ffe2a8" opacity="0.95"/>
<circle cx="572.8" cy="639.2" r="0.85" fill="#fff0c8" opacity="0.95"/>
<circle cx="574.3" cy="638.7" r="0.50" fill="#fff0c8" opacity="0.95"/>
<circle cx="573.3" cy="638.0" r="0.57" fill="#ffd488" opacity="0.95"/>
<circle cx="572.4" cy="638.5" r="0.82" fill="#ffe2a8" opacity="0.95"/>
<circle cx="577.1" cy="637.4" r="0.66" fill="#ffe2a8" opacity="0.95"/>
<ellipse cx="600.6" cy="625.8" rx="4.5" ry="2.3" fill="#c89048" opacity="0.28" filter="url(#b2)" transform="rotate(0 600.6 625.8)"/>
<circle cx="598.6" cy="626.3" r="0.58" fill="#ffe2a8" opacity="0.95"/>
<circle cx="599.7" cy="626.2" r="0.78" fill="#fff0c8" opacity="0.95"/>
<circle cx="604.3" cy="626.5" r="0.95" fill="#ffe2a8" opacity="0.95"/>
<circle cx="599.1" cy="625.8" r="0.49" fill="#ffe2a8" opacity="0.95"/>
<circle cx="601.2" cy="626.1" r="0.93" fill="#ffe2a8" opacity="0.95"/>
<circle cx="601.8" cy="625.6" r="0.96" fill="#ffe2a8" opacity="0.95"/>
<circle cx="601.0" cy="625.3" r="0.47" fill="#ffe2a8" opacity="0.95"/>
<circle cx="602.1" cy="626.5" r="0.94" fill="#fff0c8" opacity="0.95"/>
<ellipse cx="669.7" cy="614.4" rx="6.0" ry="2.5" fill="#c89048" opacity="0.28" filter="url(#b2)" transform="rotate(-10 669.7 614.4)"/>
<circle cx="671.8" cy="613.3" r="0.65" fill="#fff0c8" opacity="0.95"/>
<circle cx="670.9" cy="614.6" r="0.97" fill="#ffe2a8" opacity="0.95"/>
<circle cx="672.8" cy="613.7" r="0.82" fill="#ffe2a8" opacity="0.95"/>
<circle cx="669.3" cy="614.9" r="0.52" fill="#fff0c8" opacity="0.95"/>
<circle cx="666.1" cy="614.9" r="0.69" fill="#fff0c8" opacity="0.95"/>
<circle cx="669.7" cy="614.7" r="0.81" fill="#ffe2a8" opacity="0.95"/>
<circle cx="671.3" cy="614.4" r="0.87" fill="#fff0c8" opacity="0.95"/>
<circle cx="668.5" cy="614.6" r="0.63" fill="#fff0c8" opacity="0.95"/>
<circle cx="671.6" cy="614.6" r="0.94" fill="#fff0c8" opacity="0.95"/>
<circle cx="667.1" cy="615.1" r="0.92" fill="#ffd488" opacity="0.95"/>
<ellipse cx="695" cy="605" rx="4.5" ry="2.2" fill="#c89048" opacity="0.28" filter="url(#b2)" transform="rotate(0 695 605)"/>
<circle cx="695.8" cy="605.1" r="0.71" fill="#fff0c8" opacity="0.95"/>
<circle cx="697.5" cy="605.2" r="0.67" fill="#ffe2a8" opacity="0.95"/>
<circle cx="694.9" cy="605.2" r="0.67" fill="#ffe2a8" opacity="0.95"/>
<circle cx="695.3" cy="605.0" r="0.68" fill="#ffd488" opacity="0.95"/>
<circle cx="694.6" cy="604.9" r="0.46" fill="#ffd488" opacity="0.95"/>
<circle cx="696.3" cy="605.0" r="0.47" fill="#ffd488" opacity="0.95"/>
<circle cx="696.1" cy="604.4" r="0.83" fill="#ffd488" opacity="0.95"/>
<circle cx="694.1" cy="604.6" r="0.65" fill="#fff0c8" opacity="0.95"/>
<ellipse cx="706" cy="609.4" rx="4.5" ry="2.2" fill="#c89048" opacity="0.28" filter="url(#b2)" transform="rotate(0 706 609.4)"/>
<circle cx="704.6" cy="609.1" r="0.75" fill="#ffd488" opacity="0.95"/>
<circle cx="705.9" cy="610.9" r="0.72" fill="#fff0c8" opacity="0.95"/>
<circle cx="708.7" cy="608.9" r="0.94" fill="#ffe2a8" opacity="0.95"/>
<circle cx="704.1" cy="609.6" r="0.96" fill="#ffe2a8" opacity="0.95"/>
<circle cx="707.2" cy="609.2" r="0.76" fill="#ffd488" opacity="0.95"/>
<circle cx="708.0" cy="610.6" r="0.61" fill="#ffe2a8" opacity="0.95"/>
<circle cx="705.9" cy="609.4" r="0.71" fill="#ffe2a8" opacity="0.95"/>
<circle cx="702.6" cy="609.4" r="0.73" fill="#ffd488" opacity="0.95"/>
<ellipse cx="721.3" cy="636.8" rx="5.2" ry="2.7" fill="#c89048" opacity="0.28" filter="url(#b2)" transform="rotate(0 721.3 636.8)"/>
<circle cx="720.3" cy="635.8" r="0.67" fill="#ffd488" opacity="0.95"/>
<circle cx="719.1" cy="636.3" r="0.70" fill="#ffe2a8" opacity="0.95"/>
<circle cx="720.2" cy="637.8" r="0.48" fill="#ffe2a8" opacity="0.95"/>
<circle cx="722.7" cy="636.7" r="0.69" fill="#ffe2a8" opacity="0.95"/>
<circle cx="721.2" cy="637.0" r="0.77" fill="#ffd488" opacity="0.95"/>
<circle cx="721.7" cy="636.3" r="0.95" fill="#fff0c8" opacity="0.95"/>
<circle cx="722.6" cy="637.2" r="0.48" fill="#ffe2a8" opacity="0.95"/>
<circle cx="719.3" cy="636.9" r="0.61" fill="#fff0c8" opacity="0.95"/>
<circle cx="719.7" cy="636.8" r="0.56" fill="#ffe2a8" opacity="0.95"/>
<ellipse cx="679.6" cy="640" rx="3.8" ry="2.7" fill="#c89048" opacity="0.28" filter="url(#b2)" transform="rotate(0 679.6 640)"/>
<circle cx="679.1" cy="639.2" r="0.61" fill="#fff0c8" opacity="0.95"/>
<circle cx="681.2" cy="639.4" r="0.89" fill="#fff0c8" opacity="0.95"/>
<circle cx="679.4" cy="640.6" r="0.93" fill="#ffe2a8" opacity="0.95"/>
<circle cx="680.0" cy="639.4" r="0.58" fill="#ffe2a8" opacity="0.95"/>
<circle cx="681.4" cy="639.7" r="0.71" fill="#fff0c8" opacity="0.95"/>
<circle cx="677.5" cy="638.9" r="0.96" fill="#fff0c8" opacity="0.95"/>
<circle cx="681.9" cy="638.5" r="0.54" fill="#ffd488" opacity="0.95"/>
<ellipse cx="622.5" cy="652.2" rx="4.5" ry="2.3" fill="#c89048" opacity="0.28" filter="url(#b2)" transform="rotate(-20 622.5 652.2)"/>
<circle cx="625.3" cy="651.0" r="0.62" fill="#ffe2a8" opacity="0.95"/>
<circle cx="620.4" cy="652.2" r="0.59" fill="#fff0c8" opacity="0.95"/>
<circle cx="621.9" cy="652.2" r="0.85" fill="#ffe2a8" opacity="0.95"/>
<circle cx="621.3" cy="652.9" r="0.67" fill="#ffe2a8" opacity="0.95"/>
<circle cx="619.2" cy="652.7" r="0.80" fill="#ffd488" opacity="0.95"/>
<circle cx="623.2" cy="653.0" r="0.47" fill="#ffe2a8" opacity="0.95"/>
<circle cx="618.6" cy="653.6" r="0.58" fill="#fff0c8" opacity="0.95"/>
<circle cx="622.5" cy="651.1" r="0.73" fill="#ffd488" opacity="0.95"/>
<ellipse cx="598.4" cy="659.8" rx="3.8" ry="2.2" fill="#c89048" opacity="0.28" filter="url(#b2)" transform="rotate(0 598.4 659.8)"/>
<circle cx="596.5" cy="660.0" r="0.46" fill="#ffd488" opacity="0.95"/>
<circle cx="597.2" cy="658.5" r="0.63" fill="#ffe2a8" opacity="0.95"/>
<circle cx="599.3" cy="659.5" r="0.97" fill="#fff0c8" opacity="0.95"/>
<circle cx="597.9" cy="660.4" r="0.48" fill="#ffe2a8" opacity="0.95"/>
<circle cx="598.1" cy="660.5" r="0.72" fill="#ffe2a8" opacity="0.95"/>
<circle cx="600.0" cy="660.3" r="0.48" fill="#fff0c8" opacity="0.95"/>
<circle cx="597.4" cy="659.7" r="0.96" fill="#ffd488" opacity="0.95"/>
<ellipse cx="607.2" cy="659.8" rx="3.8" ry="2.2" fill="#c89048" opacity="0.28" filter="url(#b2)" transform="rotate(0 607.2 659.8)"/>
<circle cx="607.3" cy="660.3" r="0.49" fill="#ffe2a8" opacity="0.95"/>
<circle cx="608.2" cy="659.7" r="0.92" fill="#fff0c8" opacity="0.95"/>
<circle cx="606.3" cy="659.7" r="0.96" fill="#ffd488" opacity="0.95"/>
<circle cx="607.6" cy="659.7" r="0.69" fill="#ffd488" opacity="0.95"/>
<circle cx="606.4" cy="658.9" r="0.76" fill="#fff0c8" opacity="0.95"/>
<circle cx="608.5" cy="659.5" r="0.97" fill="#fff0c8" opacity="0.95"/>
<circle cx="603.0" cy="659.3" r="0.74" fill="#ffe2a8" opacity="0.95"/>
<ellipse cx="624.7" cy="666.4" rx="3.8" ry="2.7" fill="#c89048" opacity="0.28" filter="url(#b2)" transform="rotate(0 624.7 666.4)"/>
<circle cx="626.2" cy="668.4" r="0.79" fill="#ffe2a8" opacity="0.95"/>
<circle cx="623.8" cy="666.2" r="0.85" fill="#fff0c8" opacity="0.95"/>
<circle cx="625.6" cy="666.2" r="0.89" fill="#ffe2a8" opacity="0.95"/>
<circle cx="624.3" cy="665.6" r="0.69" fill="#ffe2a8" opacity="0.95"/>
<circle cx="625.5" cy="666.3" r="0.59" fill="#ffe2a8" opacity="0.95"/>
<circle cx="624.6" cy="666.4" r="0.71" fill="#fff0c8" opacity="0.95"/>
<circle cx="624.1" cy="666.5" r="0.68" fill="#fff0c8" opacity="0.95"/>
<ellipse cx="552.3" cy="658.7" rx="3.8" ry="2.2" fill="#c89048" opacity="0.28" filter="url(#b2)" transform="rotate(0 552.3 658.7)"/>
<circle cx="552.5" cy="658.3" r="0.90" fill="#ffe2a8" opacity="0.95"/>
<circle cx="551.6" cy="657.9" r="0.48" fill="#fff0c8" opacity="0.95"/>
<circle cx="551.4" cy="658.5" r="0.76" fill="#ffd488" opacity="0.95"/>
<circle cx="552.8" cy="658.7" r="0.67" fill="#ffd488" opacity="0.95"/>
<circle cx="551.7" cy="658.4" r="0.58" fill="#fff0c8" opacity="0.95"/>
<circle cx="550.6" cy="658.8" r="0.62" fill="#fff0c8" opacity="0.95"/>
<circle cx="553.1" cy="659.0" r="0.57" fill="#fff0c8" opacity="0.95"/>
<ellipse cx="642.3" cy="671.9" rx="4.5" ry="2.7" fill="#c89048" opacity="0.28" filter="url(#b2)" transform="rotate(0 642.3 671.9)"/>
<circle cx="640.8" cy="671.9" r="0.67" fill="#ffe2a8" opacity="0.95"/>
<circle cx="642.2" cy="673.2" r="0.84" fill="#ffd488" opacity="0.95"/>
<circle cx="642.9" cy="673.0" r="0.56" fill="#ffd488" opacity="0.95"/>
<circle cx="641.5" cy="672.9" r="0.68" fill="#ffd488" opacity="0.95"/>
<circle cx="641.8" cy="671.7" r="0.85" fill="#fff0c8" opacity="0.95"/>
<circle cx="643.5" cy="671.3" r="0.66" fill="#fff0c8" opacity="0.95"/>
<circle cx="644.9" cy="671.7" r="0.67" fill="#fff0c8" opacity="0.95"/>
<circle cx="643.3" cy="672.1" r="0.58" fill="#fff0c8" opacity="0.95"/>
<ellipse cx="851" cy="587.5" rx="9.0" ry="2.7" fill="#c89048" opacity="0.28" filter="url(#b2)" transform="rotate(0 851 587.5)"/>
<circle cx="855.2" cy="587.2" r="0.82" fill="#ffd488" opacity="0.95"/>
<circle cx="851.6" cy="588.1" r="0.78" fill="#ffe2a8" opacity="0.95"/>
<circle cx="842.9" cy="587.0" r="0.64" fill="#fff0c8" opacity="0.95"/>
<circle cx="846.5" cy="588.4" r="0.64" fill="#ffd488" opacity="0.95"/>
<circle cx="850.8" cy="588.5" r="0.57" fill="#ffd488" opacity="0.95"/>
<circle cx="848.7" cy="589.3" r="0.86" fill="#ffd488" opacity="0.95"/>
<circle cx="854.7" cy="587.9" r="0.90" fill="#fff0c8" opacity="0.95"/>
<circle cx="847.9" cy="588.1" r="0.84" fill="#ffd488" opacity="0.95"/>
<circle cx="850.9" cy="586.5" r="0.59" fill="#fff0c8" opacity="0.95"/>
<circle cx="849.7" cy="586.8" r="0.54" fill="#ffe2a8" opacity="0.95"/>
<circle cx="854.4" cy="588.5" r="0.63" fill="#fff0c8" opacity="0.95"/>
<circle cx="850.4" cy="587.5" r="0.87" fill="#ffd488" opacity="0.95"/>
<circle cx="847.5" cy="587.3" r="0.54" fill="#fff0c8" opacity="0.95"/>
<ellipse cx="832.4" cy="608.8" rx="7.5" ry="3.2" fill="#c89048" opacity="0.28" filter="url(#b2)" transform="rotate(0 832.4 608.8)"/>
<circle cx="833.2" cy="607.8" r="0.72" fill="#ffd488" opacity="0.95"/>
<circle cx="831.9" cy="608.4" r="0.48" fill="#ffd488" opacity="0.95"/>
<circle cx="824.8" cy="608.3" r="0.76" fill="#ffd488" opacity="0.95"/>
<circle cx="829.9" cy="610.0" r="0.49" fill="#ffd488" opacity="0.95"/>
<circle cx="830.9" cy="608.6" r="0.65" fill="#ffe2a8" opacity="0.95"/>
<circle cx="830.9" cy="609.3" r="0.65" fill="#fff0c8" opacity="0.95"/>
<circle cx="829.3" cy="608.7" r="0.67" fill="#ffd488" opacity="0.95"/>
<circle cx="833.7" cy="609.4" r="0.93" fill="#fff0c8" opacity="0.95"/>
<circle cx="832.4" cy="609.4" r="0.51" fill="#ffe2a8" opacity="0.95"/>
<circle cx="832.0" cy="608.6" r="0.56" fill="#ffe2a8" opacity="0.95"/>
<circle cx="828.6" cy="608.9" r="0.47" fill="#ffd488" opacity="0.95"/>
<ellipse cx="745.7" cy="595" rx="6.0" ry="2.3" fill="#c89048" opacity="0.28" filter="url(#b2)" transform="rotate(0 745.7 595)"/>
<circle cx="746.6" cy="594.7" r="0.84" fill="#fff0c8" opacity="0.95"/>
<circle cx="744.1" cy="596.1" r="0.95" fill="#ffd488" opacity="0.95"/>
<circle cx="745.6" cy="594.9" r="0.95" fill="#fff0c8" opacity="0.95"/>
<circle cx="745.2" cy="595.8" r="0.65" fill="#fff0c8" opacity="0.95"/>
<circle cx="746.2" cy="595.9" r="0.53" fill="#ffd488" opacity="0.95"/>
<circle cx="746.7" cy="593.7" r="0.55" fill="#ffe2a8" opacity="0.95"/>
<circle cx="748.3" cy="594.5" r="0.54" fill="#ffd488" opacity="0.95"/>
<circle cx="744.2" cy="594.6" r="0.87" fill="#ffd488" opacity="0.95"/>
<circle cx="746.7" cy="594.7" r="0.65" fill="#ffe2a8" opacity="0.95"/>
<circle cx="742.7" cy="595.0" r="0.92" fill="#fff0c8" opacity="0.95"/>
<ellipse cx="771" cy="612.5" rx="4.5" ry="2.9" fill="#c89048" opacity="0.28" filter="url(#b2)" transform="rotate(0 771 612.5)"/>
<circle cx="773.7" cy="613.1" r="0.75" fill="#fff0c8" opacity="0.95"/>
<circle cx="772.3" cy="612.6" r="0.78" fill="#ffd488" opacity="0.95"/>
<circle cx="768.6" cy="611.6" r="0.48" fill="#ffe2a8" opacity="0.95"/>
<circle cx="768.1" cy="613.4" r="0.79" fill="#fff0c8" opacity="0.95"/>
<circle cx="770.7" cy="613.7" r="0.83" fill="#ffd488" opacity="0.95"/>
<circle cx="773.5" cy="613.0" r="0.57" fill="#ffe2a8" opacity="0.95"/>
<circle cx="770.1" cy="613.1" r="0.59" fill="#ffd488" opacity="0.95"/>
<circle cx="770.9" cy="612.6" r="0.65" fill="#ffd488" opacity="0.95"/>
<ellipse cx="722.7" cy="637.3" rx="5.2" ry="2.7" fill="#c89048" opacity="0.28" filter="url(#b2)" transform="rotate(0 722.7 637.3)"/>
<circle cx="721.5" cy="637.0" r="0.51" fill="#ffe2a8" opacity="0.95"/>
<circle cx="720.6" cy="637.5" r="0.62" fill="#fff0c8" opacity="0.95"/>
<circle cx="723.3" cy="636.5" r="0.84" fill="#ffe2a8" opacity="0.95"/>
<circle cx="721.2" cy="637.7" r="0.73" fill="#ffd488" opacity="0.95"/>
<circle cx="720.5" cy="637.6" r="1.00" fill="#ffe2a8" opacity="0.95"/>
<circle cx="722.4" cy="637.9" r="0.67" fill="#fff0c8" opacity="0.95"/>
<circle cx="723.4" cy="636.3" r="0.61" fill="#ffe2a8" opacity="0.95"/>
<circle cx="720.0" cy="638.6" r="0.76" fill="#ffd488" opacity="0.95"/>
<circle cx="721.7" cy="636.1" r="0.70" fill="#ffd488" opacity="0.95"/>
<ellipse cx="771" cy="635.8" rx="4.5" ry="2.5" fill="#c89048" opacity="0.28" filter="url(#b2)" transform="rotate(0 771 635.8)"/>
<circle cx="769.9" cy="635.8" r="0.77" fill="#fff0c8" opacity="0.95"/>
<circle cx="773.5" cy="635.1" r="0.49" fill="#ffe2a8" opacity="0.95"/>
<circle cx="769.7" cy="635.7" r="0.68" fill="#fff0c8" opacity="0.95"/>
<circle cx="769.9" cy="637.1" r="0.73" fill="#ffe2a8" opacity="0.95"/>
<circle cx="770.3" cy="635.7" r="0.93" fill="#ffd488" opacity="0.95"/>
<circle cx="770.5" cy="634.7" r="0.70" fill="#ffd488" opacity="0.95"/>
<circle cx="769.4" cy="635.3" r="0.48" fill="#fff0c8" opacity="0.95"/>
<circle cx="771.8" cy="636.5" r="0.95" fill="#fff0c8" opacity="0.95"/>
<ellipse cx="832.4" cy="638" rx="7.5" ry="3.6" fill="#c89048" opacity="0.28" filter="url(#b2)" transform="rotate(-15 832.4 638)"/>
<circle cx="826.7" cy="639.5" r="0.81" fill="#ffd488" opacity="0.95"/>
<circle cx="837.8" cy="636.4" r="0.79" fill="#ffe2a8" opacity="0.95"/>
<circle cx="833.4" cy="639.2" r="0.57" fill="#ffe2a8" opacity="0.95"/>
<circle cx="832.7" cy="638.8" r="0.55" fill="#fff0c8" opacity="0.95"/>
<circle cx="825.8" cy="639.4" r="0.55" fill="#ffe2a8" opacity="0.95"/>
<circle cx="833.5" cy="636.2" r="0.87" fill="#ffe2a8" opacity="0.95"/>
<circle cx="830.6" cy="639.9" r="0.84" fill="#ffe2a8" opacity="0.95"/>
<circle cx="829.4" cy="637.5" r="0.94" fill="#fff0c8" opacity="0.95"/>
<circle cx="834.4" cy="637.2" r="0.59" fill="#fff0c8" opacity="0.95"/>
<circle cx="834.1" cy="638.9" r="0.79" fill="#fff0c8" opacity="0.95"/>
<circle cx="835.5" cy="637.5" r="0.66" fill="#fff0c8" opacity="0.95"/>
<ellipse cx="881.8" cy="638.4" rx="4.5" ry="2.5" fill="#c89048" opacity="0.28" filter="url(#b2)" transform="rotate(0 881.8 638.4)"/>
<circle cx="881.8" cy="639.5" r="0.55" fill="#ffd488" opacity="0.95"/>
<circle cx="881.6" cy="638.2" r="0.77" fill="#ffd488" opacity="0.95"/>
<circle cx="883.8" cy="637.9" r="0.49" fill="#ffe2a8" opacity="0.95"/>
<circle cx="881.3" cy="637.8" r="0.96" fill="#fff0c8" opacity="0.95"/>
<circle cx="880.5" cy="636.5" r="0.82" fill="#fff0c8" opacity="0.95"/>
<circle cx="880.5" cy="636.9" r="0.63" fill="#ffe2a8" opacity="0.95"/>
<circle cx="883.4" cy="638.7" r="0.66" fill="#fff0c8" opacity="0.95"/>
<circle cx="881.8" cy="638.7" r="0.65" fill="#fff0c8" opacity="0.95"/>
<ellipse cx="905.9" cy="603.3" rx="6.0" ry="2.7" fill="#c89048" opacity="0.28" filter="url(#b2)" transform="rotate(0 905.9 603.3)"/>
<circle cx="904.7" cy="603.8" r="0.53" fill="#fff0c8" opacity="0.95"/>
<circle cx="904.2" cy="602.5" r="0.56" fill="#ffe2a8" opacity="0.95"/>
<circle cx="902.5" cy="603.3" r="0.76" fill="#ffe2a8" opacity="0.95"/>
<circle cx="903.7" cy="603.6" r="0.47" fill="#fff0c8" opacity="0.95"/>
<circle cx="906.2" cy="603.2" r="0.55" fill="#ffd488" opacity="0.95"/>
<circle cx="906.2" cy="604.1" r="0.66" fill="#ffe2a8" opacity="0.95"/>
<circle cx="906.1" cy="602.1" r="0.48" fill="#ffe2a8" opacity="0.95"/>
<circle cx="906.6" cy="603.7" r="0.47" fill="#ffe2a8" opacity="0.95"/>
<circle cx="906.1" cy="604.4" r="0.53" fill="#fff0c8" opacity="0.95"/>
<circle cx="909.6" cy="603.7" r="0.78" fill="#ffe2a8" opacity="0.95"/>
<ellipse cx="866.4" cy="617.5" rx="3.8" ry="2.2" fill="#c89048" opacity="0.28" filter="url(#b2)" transform="rotate(0 866.4 617.5)"/>
<circle cx="865.6" cy="617.3" r="0.55" fill="#ffd488" opacity="0.95"/>
<circle cx="867.0" cy="617.8" r="0.80" fill="#ffe2a8" opacity="0.95"/>
<circle cx="868.5" cy="618.0" r="0.89" fill="#ffd488" opacity="0.95"/>
<circle cx="867.4" cy="618.1" r="0.73" fill="#ffd488" opacity="0.95"/>
<circle cx="867.5" cy="617.5" r="0.99" fill="#ffe2a8" opacity="0.95"/>
<circle cx="866.8" cy="618.0" r="0.46" fill="#fff0c8" opacity="0.95"/>
<circle cx="867.0" cy="617.1" r="0.61" fill="#fff0c8" opacity="0.95"/>
<ellipse cx="866.4" cy="654.8" rx="4.5" ry="2.7" fill="#c89048" opacity="0.28" filter="url(#b2)" transform="rotate(0 866.4 654.8)"/>
<circle cx="867.4" cy="655.3" r="0.84" fill="#ffd488" opacity="0.95"/>
<circle cx="867.0" cy="654.6" r="0.81" fill="#ffd488" opacity="0.95"/>
<circle cx="866.1" cy="655.4" r="0.86" fill="#ffe2a8" opacity="0.95"/>
<circle cx="865.3" cy="653.2" r="0.55" fill="#ffd488" opacity="0.95"/>
<circle cx="867.3" cy="654.3" r="0.59" fill="#fff0c8" opacity="0.95"/>
<circle cx="868.8" cy="654.6" r="0.93" fill="#ffd488" opacity="0.95"/>
<circle cx="864.5" cy="654.2" r="0.77" fill="#fff0c8" opacity="0.95"/>
<circle cx="867.3" cy="654.4" r="0.58" fill="#ffd488" opacity="0.95"/>
<ellipse cx="789.6" cy="649.8" rx="4.5" ry="2.2" fill="#c89048" opacity="0.28" filter="url(#b2)" transform="rotate(0 789.6 649.8)"/>
<circle cx="787.5" cy="648.5" r="0.53" fill="#ffd488" opacity="0.95"/>
<circle cx="788.9" cy="649.8" r="0.88" fill="#fff0c8" opacity="0.95"/>
<circle cx="791.6" cy="650.1" r="0.60" fill="#ffd488" opacity="0.95"/>
<circle cx="791.0" cy="649.6" r="0.60" fill="#fff0c8" opacity="0.95"/>
<circle cx="792.4" cy="648.4" r="0.59" fill="#ffd488" opacity="0.95"/>
<circle cx="787.6" cy="649.8" r="0.75" fill="#ffd488" opacity="0.95"/>
<circle cx="790.2" cy="650.5" r="0.64" fill="#ffe2a8" opacity="0.95"/>
<circle cx="791.3" cy="650.4" r="0.79" fill="#fff0c8" opacity="0.95"/>
<ellipse cx="753.4" cy="652.7" rx="4.5" ry="2.3" fill="#c89048" opacity="0.28" filter="url(#b2)" transform="rotate(0 753.4 652.7)"/>
<circle cx="752.7" cy="654.7" r="0.80" fill="#ffe2a8" opacity="0.95"/>
<circle cx="750.3" cy="653.3" r="0.89" fill="#ffe2a8" opacity="0.95"/>
<circle cx="752.9" cy="651.4" r="0.96" fill="#ffd488" opacity="0.95"/>
<circle cx="753.2" cy="653.5" r="0.58" fill="#fff0c8" opacity="0.95"/>
<circle cx="753.3" cy="652.0" r="0.83" fill="#ffe2a8" opacity="0.95"/>
<circle cx="755.3" cy="652.2" r="0.98" fill="#ffe2a8" opacity="0.95"/>
<circle cx="752.7" cy="652.4" r="0.47" fill="#ffd488" opacity="0.95"/>
<circle cx="754.5" cy="652.0" r="0.56" fill="#fff0c8" opacity="0.95"/>
<ellipse cx="799.5" cy="670.2" rx="9.0" ry="5.4" fill="#c89048" opacity="0.28" filter="url(#b2)" transform="rotate(0 799.5 670.2)"/>
<circle cx="795.9" cy="666.7" r="0.48" fill="#ffe2a8" opacity="0.95"/>
<circle cx="801.0" cy="669.9" r="0.82" fill="#ffd488" opacity="0.95"/>
<circle cx="798.0" cy="668.5" r="0.92" fill="#ffd488" opacity="0.95"/>
<circle cx="800.5" cy="670.0" r="0.81" fill="#ffd488" opacity="0.95"/>
<circle cx="799.6" cy="670.6" r="0.54" fill="#ffe2a8" opacity="0.95"/>
<circle cx="801.0" cy="671.4" r="0.50" fill="#fff0c8" opacity="0.95"/>
<circle cx="800.7" cy="669.0" r="0.52" fill="#fff0c8" opacity="0.95"/>
<circle cx="797.8" cy="669.0" r="0.68" fill="#fff0c8" opacity="0.95"/>
<circle cx="794.3" cy="668.7" r="0.82" fill="#ffd488" opacity="0.95"/>
<circle cx="798.3" cy="672.7" r="0.80" fill="#ffd488" opacity="0.95"/>
<circle cx="800.3" cy="671.8" r="0.92" fill="#ffd488" opacity="0.95"/>
<circle cx="796.6" cy="669.1" r="0.73" fill="#ffe2a8" opacity="0.95"/>
<circle cx="796.8" cy="669.9" r="0.65" fill="#ffe2a8" opacity="0.95"/>
<ellipse cx="761" cy="671.3" rx="4.5" ry="3.6" fill="#c89048" opacity="0.28" filter="url(#b2)" transform="rotate(0 761 671.3)"/>
<circle cx="763.7" cy="671.2" r="0.61" fill="#ffd488" opacity="0.95"/>
<circle cx="759.8" cy="670.6" r="0.60" fill="#fff0c8" opacity="0.95"/>
<circle cx="759.5" cy="671.4" r="0.71" fill="#ffd488" opacity="0.95"/>
<circle cx="761.7" cy="671.5" r="0.84" fill="#fff0c8" opacity="0.95"/>
<circle cx="763.0" cy="672.0" r="0.53" fill="#ffe2a8" opacity="0.95"/>
<circle cx="760.4" cy="671.1" r="0.58" fill="#ffe2a8" opacity="0.95"/>
<circle cx="759.8" cy="671.6" r="0.65" fill="#ffe2a8" opacity="0.95"/>
<circle cx="761.0" cy="671.2" r="0.54" fill="#ffe2a8" opacity="0.95"/>
<ellipse cx="726" cy="657" rx="4.5" ry="2.3" fill="#c89048" opacity="0.28" filter="url(#b2)" transform="rotate(0 726 657)"/>
<circle cx="726.5" cy="657.3" r="0.94" fill="#fff0c8" opacity="0.95"/>
<circle cx="725.8" cy="656.2" r="0.54" fill="#ffd488" opacity="0.95"/>
<circle cx="724.1" cy="657.3" r="0.48" fill="#ffe2a8" opacity="0.95"/>
<circle cx="725.6" cy="657.3" r="0.88" fill="#ffe2a8" opacity="0.95"/>
<circle cx="722.1" cy="656.4" r="0.63" fill="#ffd488" opacity="0.95"/>
<circle cx="728.2" cy="656.3" r="0.56" fill="#ffe2a8" opacity="0.95"/>
<circle cx="726.8" cy="656.8" r="0.72" fill="#ffd488" opacity="0.95"/>
<circle cx="726.9" cy="656.8" r="0.80" fill="#ffe2a8" opacity="0.95"/>
<ellipse cx="824.7" cy="649.4" rx="3.0" ry="2.5" fill="#c89048" opacity="0.28" filter="url(#b2)" transform="rotate(0 824.7 649.4)"/>
<circle cx="824.2" cy="649.6" r="0.70" fill="#ffe2a8" opacity="0.95"/>
<circle cx="824.0" cy="650.4" r="0.95" fill="#ffe2a8" opacity="0.95"/>
<circle cx="825.0" cy="648.9" r="0.91" fill="#fff0c8" opacity="0.95"/>
<circle cx="826.6" cy="649.0" r="0.59" fill="#fff0c8" opacity="0.95"/>
<circle cx="822.7" cy="649.2" r="0.78" fill="#ffd488" opacity="0.95"/>
<circle cx="824.8" cy="648.8" r="0.68" fill="#fff0c8" opacity="0.95"/>
<circle cx="825.4" cy="649.2" r="0.48" fill="#fff0c8" opacity="0.95"/>
<ellipse cx="824.7" cy="656" rx="3.0" ry="2.5" fill="#c89048" opacity="0.28" filter="url(#b2)" transform="rotate(0 824.7 656)"/>
<circle cx="825.2" cy="656.2" r="0.90" fill="#ffd488" opacity="0.95"/>
<circle cx="825.4" cy="655.3" r="0.56" fill="#ffe2a8" opacity="0.95"/>
<circle cx="825.9" cy="657.7" r="0.78" fill="#ffe2a8" opacity="0.95"/>
<circle cx="825.7" cy="656.4" r="0.74" fill="#fff0c8" opacity="0.95"/>
<circle cx="825.2" cy="654.8" r="0.69" fill="#ffe2a8" opacity="0.95"/>
<circle cx="824.1" cy="655.5" r="0.68" fill="#ffd488" opacity="0.95"/>
<circle cx="825.2" cy="656.4" r="0.71" fill="#fff0c8" opacity="0.95"/>
<ellipse cx="826.9" cy="662.5" rx="3.0" ry="2.5" fill="#c89048" opacity="0.28" filter="url(#b2)" transform="rotate(0 826.9 662.5)"/>
<circle cx="827.9" cy="661.5" r="0.82" fill="#ffd488" opacity="0.95"/>
<circle cx="825.8" cy="663.2" r="0.59" fill="#ffd488" opacity="0.95"/>
<circle cx="824.5" cy="661.7" r="0.55" fill="#ffd488" opacity="0.95"/>
<circle cx="825.7" cy="662.0" r="0.83" fill="#fff0c8" opacity="0.95"/>
<circle cx="825.5" cy="662.3" r="0.74" fill="#ffd488" opacity="0.95"/>
<circle cx="827.2" cy="663.9" r="0.64" fill="#ffd488" opacity="0.95"/>
<circle cx="828.6" cy="662.1" r="0.96" fill="#ffd488" opacity="0.95"/>
<ellipse cx="855.4" cy="671.3" rx="4.5" ry="2.7" fill="#c89048" opacity="0.28" filter="url(#b2)" transform="rotate(0 855.4 671.3)"/>
<circle cx="854.8" cy="672.1" r="0.57" fill="#fff0c8" opacity="0.95"/>
<circle cx="855.8" cy="670.7" r="0.56" fill="#ffe2a8" opacity="0.95"/>
<circle cx="854.9" cy="671.5" r="0.86" fill="#fff0c8" opacity="0.95"/>
<circle cx="857.0" cy="671.4" r="0.78" fill="#ffd488" opacity="0.95"/>
<circle cx="854.6" cy="672.1" r="0.69" fill="#ffd488" opacity="0.95"/>
<circle cx="856.8" cy="671.2" r="0.96" fill="#fff0c8" opacity="0.95"/>
<circle cx="854.7" cy="671.1" r="0.89" fill="#ffe2a8" opacity="0.95"/>
<circle cx="856.4" cy="672.3" r="0.73" fill="#ffe2a8" opacity="0.95"/>
<ellipse cx="886.2" cy="673.5" rx="6.0" ry="3.2" fill="#c89048" opacity="0.28" filter="url(#b2)" transform="rotate(0 886.2 673.5)"/>
<circle cx="885.2" cy="673.8" r="1.00" fill="#fff0c8" opacity="0.95"/>
<circle cx="885.7" cy="674.2" r="0.49" fill="#ffd488" opacity="0.95"/>
<circle cx="884.8" cy="672.7" r="0.88" fill="#fff0c8" opacity="0.95"/>
<circle cx="888.0" cy="674.2" r="0.93" fill="#fff0c8" opacity="0.95"/>
<circle cx="886.1" cy="671.6" r="0.78" fill="#ffd488" opacity="0.95"/>
<circle cx="887.1" cy="673.8" r="0.48" fill="#ffe2a8" opacity="0.95"/>
<circle cx="889.6" cy="673.1" r="0.51" fill="#ffe2a8" opacity="0.95"/>
<circle cx="883.7" cy="673.8" r="0.60" fill="#fff0c8" opacity="0.95"/>
<circle cx="884.3" cy="675.0" r="0.89" fill="#ffe2a8" opacity="0.95"/>
<circle cx="884.3" cy="673.5" r="0.95" fill="#ffe2a8" opacity="0.95"/>
<ellipse cx="807" cy="638" rx="3.8" ry="2.3" fill="#c89048" opacity="0.28" filter="url(#b2)" transform="rotate(0 807 638)"/>
<circle cx="807.9" cy="638.2" r="0.87" fill="#fff0c8" opacity="0.95"/>
<circle cx="807.0" cy="637.6" r="0.63" fill="#fff0c8" opacity="0.95"/>
<circle cx="807.4" cy="638.7" r="0.59" fill="#fff0c8" opacity="0.95"/>
<circle cx="805.5" cy="638.2" r="0.78" fill="#fff0c8" opacity="0.95"/>
<circle cx="805.4" cy="637.8" r="0.45" fill="#ffe2a8" opacity="0.95"/>
<circle cx="807.6" cy="637.5" r="0.54" fill="#fff0c8" opacity="0.95"/>
<circle cx="807.8" cy="637.9" r="0.87" fill="#ffd488" opacity="0.95"/>
<ellipse cx="560" cy="640" rx="3.0" ry="1.8" fill="#c89048" opacity="0.28" filter="url(#b2)" transform="rotate(0 560 640)"/>
<circle cx="560.6" cy="639.9" r="0.52" fill="#ffe2a8" opacity="0.95"/>
<circle cx="558.0" cy="640.5" r="0.50" fill="#ffe2a8" opacity="0.95"/>
<circle cx="559.5" cy="640.0" r="0.64" fill="#ffe2a8" opacity="0.95"/>
<circle cx="559.6" cy="640.9" r="0.75" fill="#ffd488" opacity="0.95"/>
<circle cx="559.0" cy="640.2" r="0.71" fill="#ffd488" opacity="0.95"/>
<circle cx="560.3" cy="639.4" r="0.97" fill="#ffd488" opacity="0.95"/>
<circle cx="561.5" cy="639.9" r="0.53" fill="#fff0c8" opacity="0.95"/>
<ellipse cx="690" cy="660" rx="3.8" ry="2.2" fill="#c89048" opacity="0.28" filter="url(#b2)" transform="rotate(0 690 660)"/>
<circle cx="689.1" cy="660.4" r="0.47" fill="#ffe2a8" opacity="0.95"/>
<circle cx="691.5" cy="659.5" r="0.57" fill="#ffd488" opacity="0.95"/>
<circle cx="691.1" cy="660.1" r="0.65" fill="#ffd488" opacity="0.95"/>
<circle cx="690.1" cy="659.8" r="0.83" fill="#fff0c8" opacity="0.95"/>
<circle cx="689.4" cy="660.3" r="0.51" fill="#ffe2a8" opacity="0.95"/>
<circle cx="688.0" cy="660.4" r="0.55" fill="#ffe2a8" opacity="0.95"/>
<circle cx="690.4" cy="660.6" r="0.71" fill="#ffe2a8" opacity="0.95"/>
<ellipse cx="905" cy="665" rx="4.5" ry="2.5" fill="#c89048" opacity="0.28" filter="url(#b2)" transform="rotate(0 905 665)"/>
<circle cx="904.9" cy="664.4" r="0.70" fill="#ffd488" opacity="0.95"/>
<circle cx="905.6" cy="665.2" r="0.98" fill="#ffe2a8" opacity="0.95"/>
<circle cx="906.8" cy="664.5" r="0.98" fill="#ffe2a8" opacity="0.95"/>
<circle cx="907.2" cy="666.9" r="0.56" fill="#ffe2a8" opacity="0.95"/>
<circle cx="905.9" cy="665.4" r="0.69" fill="#fff0c8" opacity="0.95"/>
<circle cx="904.6" cy="664.6" r="0.94" fill="#fff0c8" opacity="0.95"/>
<circle cx="906.2" cy="665.1" r="0.95" fill="#ffd488" opacity="0.95"/>
<circle cx="904.5" cy="665.2" r="0.92" fill="#ffd488" opacity="0.95"/>
<ellipse cx="915" cy="640" rx="3.8" ry="2.2" fill="#c89048" opacity="0.28" filter="url(#b2)" transform="rotate(0 915 640)"/>
<circle cx="915.8" cy="640.2" r="0.85" fill="#ffd488" opacity="0.95"/>
<circle cx="913.6" cy="640.3" r="0.88" fill="#ffd488" opacity="0.95"/>
<circle cx="913.7" cy="640.4" r="0.67" fill="#fff0c8" opacity="0.95"/>
<circle cx="913.8" cy="639.9" r="0.70" fill="#ffe2a8" opacity="0.95"/>
<circle cx="914.3" cy="640.6" r="0.66" fill="#ffd488" opacity="0.95"/>
<circle cx="914.9" cy="639.9" r="0.87" fill="#ffe2a8" opacity="0.95"/>
<circle cx="915.2" cy="640.1" r="0.71" fill="#ffe2a8" opacity="0.95"/>
<ellipse cx="540" cy="668" rx="3.8" ry="2.2" fill="#c89048" opacity="0.28" filter="url(#b2)" transform="rotate(0 540 668)"/>
<circle cx="540.0" cy="667.9" r="0.45" fill="#fff0c8" opacity="0.95"/>
<circle cx="539.7" cy="668.0" r="0.51" fill="#fff0c8" opacity="0.95"/>
<circle cx="539.7" cy="667.8" r="0.66" fill="#ffd488" opacity="0.95"/>
<circle cx="537.8" cy="668.0" r="0.91" fill="#fff0c8" opacity="0.95"/>
<circle cx="540.7" cy="668.4" r="0.98" fill="#fff0c8" opacity="0.95"/>
<circle cx="540.8" cy="667.4" r="0.99" fill="#ffe2a8" opacity="0.95"/>
<circle cx="541.2" cy="667.0" r="0.75" fill="#fff0c8" opacity="0.95"/>
<circle cx="685" cy="599.5" r="1" fill="#ffffff"/>
<circle cx="732.5" cy="607.7" r="0.8" fill="#b8c4e0" opacity="0.8"/>
<circle cx="739" cy="607.7" r="0.8" fill="#b8c4e0" opacity="0.8"/>
<circle cx="745" cy="607.7" r="0.8" fill="#b8c4e0" opacity="0.8"/>
<circle cx="751" cy="607.7" r="0.8" fill="#b8c4e0" opacity="0.8"/>
</g>
<path d="M520 640 L527 652 L523 660 L520 660 Z" fill="#10141c" opacity="0.8"/>
</svg>
<svg class="a" style="left:0;top:0;pointer-events:none" width="957" height="684" viewBox="0 0 957 684">
<defs>
<linearGradient id="folderg" x1="0" y1="0" x2="0" y2="1"><stop offset="0" stop-color="#f4dc8c"/><stop offset="1" stop-color="#d7aa48"/></linearGradient>
<linearGradient id="diskg" x1="0" y1="0" x2="0" y2="1"><stop offset="0" stop-color="#5d9be0"/><stop offset="1" stop-color="#3e78c0"/></linearGradient>
<linearGradient id="cubeg" x1="0" y1="0" x2="0" y2="1"><stop offset="0" stop-color="#c9e9f8"/><stop offset="1" stop-color="#9fd3ee"/></linearGradient>
<radialGradient id="glassg" cx="0.4" cy="0.4" r="0.6"><stop offset="0" stop-color="#ffffff"/><stop offset="1" stop-color="#a9cdea"/></radialGradient>
</defs>
<path d="M0 0 H5.5 Q1.2 1.2 0 5.5 Z" fill="#000"/>
<path d="M957 0 H951.5 Q955.8 1.2 957 5.5 Z" fill="#000"/>
<path d="M0 684 V677.5 Q1.5 682.5 6.5 684 Z" fill="#000"/>
<path d="M957 684 V678.5 Q955.8 682.8 951.5 684 Z" fill="#000"/>
<circle cx="14" cy="13.9" r="5.8" fill="#fc4c50" stroke="#e0383e" stroke-width="0.7"/>
<circle cx="34" cy="13.9" r="5.8" fill="#f9b33c" stroke="#df9a26" stroke-width="0.7"/>
<circle cx="54" cy="13.9" r="5.8" fill="#22c549" stroke="#14a834" stroke-width="0.7"/>
<path d="M11.8 35.5 H22.689999999999998 L22.2 35.01 V47.1 H11.8 Z" fill="#fff" stroke="#d0d3d6" stroke-width="1"/>
<circle cx="10.9" cy="39.25" r="5" fill="#14945a" stroke="#0f7a49" stroke-width="0.6"/>
<path d="M7.7 39.25 H14.100000000000001 M10.9 36.05 V42.45" stroke="#fff" stroke-width="2"/>
<path d="M30 40 H35.5 L32.75 43 Z" fill="#1a1a1a"/>
<rect x="39" y="32" width="1" height="15" fill="#c8cdd0"/>
<path d="M57.3 35 L64.6 37.8 V46.2 L57.3 49 L50 46.2 V37.8 Z" fill="url(#cubeg)" stroke="#84c4e4" stroke-width="0.8"/>
<path d="M50 37.8 L57.3 40.6 L64.6 37.8 M57.3 40.6 V49" stroke="#a8d8ef" stroke-width="0.6" fill="none"/>
<text x="57.3" y="45.5" font-family="Liberation Serif" font-size="10.1" fill="#2a5aa0" text-anchor="middle">R</text>
<circle cx="50.4" cy="39.25" r="5" fill="#14945a" stroke="#0f7a49" stroke-width="0.6"/>
<path d="M47.199999999999996 39.25 H53.6 M50.4 36.05 V42.45" stroke="#fff" stroke-width="2"/>
<rect x="70" y="32" width="1" height="15" fill="#c8cdd0"/>
<path d="M77 37.5 Q77 36 78.5 36 H82.5 L84 37.5 H89 Q90 37.5 90 38.5 V40 H77 Z" fill="#c9a24a"/>
<path d="M79 38.5 H88 V45 H79 Z" fill="#f6f6f6" stroke="#cfcfcf" stroke-width="0.5"/>
<path d="M76.8 41 H92 L90 47.7 H78.5 Z" fill="url(#folderg)" stroke="#b8913a" stroke-width="0.6"/>
<path d="M86.3 42 Q87.5 38 92 38 V35.5 L97 38.7 L92 41.8 V39.8 Q89 39.8 86.3 42 Z" fill="#1c9a63"/>
<path d="M101.2 40.2 H106.2 L103.7 43 Z" fill="#1a1a1a"/>
<rect x="110" y="32" width="1" height="15" fill="#c8cdd0"/>
<path d="M120.3 35.8 Q120.3 34.8 121.3 34.8 H130.8 L132.8 36.8 V46.7 Q132.8 47.7 131.8 47.7 H121.3 Q120.3 47.7 120.3 46.7 Z" fill="#c7ddf0"/>
<rect x="122.8" y="36.0" width="7.500000000000008" height="4.5150000000000015" fill="#eef5fb"/>
<rect x="123.425" y="42.798" width="6.250000000000007" height="4.902000000000002" fill="#eef5fb"/>
<rect x="125.55" y="43.83" width="1.7500000000000022" height="3.8700000000000014" fill="#c7ddf0"/>
<path d="M147.4 35.1 Q147.4 34.1 148.4 34.1 H157 L159 36.1 V44.7 Q159 45.7 158 45.7 H148.4 Q147.4 45.7 147.4 44.7 Z" fill="#7fc6ea"/>
<rect x="149.72" y="35.300000000000004" width="6.959999999999996" height="4.0600000000000005" fill="#e8f6fd"/>
<rect x="150.3" y="41.292" width="5.799999999999997" height="4.408" fill="#e8f6fd"/>
<rect x="152.272" y="42.22" width="1.6239999999999994" height="3.4800000000000004" fill="#7fc6ea"/>
<path d="M142.7 37.2 Q142.7 36.2 143.7 36.2 H152.2 L154.2 38.2 V46.7 Q154.2 47.7 153.2 47.7 H143.7 Q142.7 47.7 142.7 46.7 Z" fill="url(#diskg)"/>
<rect x="145.0" y="37.400000000000006" width="6.8999999999999995" height="4.0249999999999995" fill="#f4f8fc"/>
<rect x="145.575" y="43.330000000000005" width="5.75" height="4.37" fill="#f4f8fc"/>
<rect x="147.53" y="44.25" width="1.61" height="3.4499999999999997" fill="url(#diskg)"/>
<rect x="166" y="32" width="1" height="15" fill="#c8cdd0"/>
<rect x="177.5" y="33.2" width="9" height="6" fill="#efdaa6" stroke="#d8c18a" stroke-width="0.5"/>
<path d="M174 39.5 Q174 38 176 38 H188.2 Q190.2 38 190.2 39.5 V45 Q190.2 46.3 188.5 46.3 H175.7 Q174 46.3 174 45 Z" fill="#d5dbe0" stroke="#a9b2b9" stroke-width="0.7"/>
<rect x="175.5" y="44.2" width="13" height="1.6" rx="0.6" fill="#9aa3ab"/>
<rect x="196" y="32" width="1" height="15" fill="#c8cdd0"/>
<path d="M211 47.7 Q212 40.5 218.5 39.5 V35.1 L224 40.5 L218.5 45.8 V42.5 Q214 42 211 47.7 Z" fill="#8b939e"/>
<rect x="358" y="32.4" width="1" height="14.300000000000004" fill="#c8cdd0"/>
<rect x="367.5" y="33.8" width="6.8" height="6.2" rx="1" fill="#e9ecee" stroke="#b9c0c5" stroke-width="1"/>
<rect x="375.2" y="33.8" width="6.8" height="6.2" rx="1" fill="#e9ecee" stroke="#b9c0c5" stroke-width="1"/>
<rect x="367.5" y="41.0" width="6.8" height="6.2" rx="1" fill="#e9ecee" stroke="#b9c0c5" stroke-width="1"/>
<rect x="375.2" y="41.0" width="6.8" height="6.2" rx="1" fill="#e9ecee" stroke="#b9c0c5" stroke-width="1"/>
<path d="M389.8 40.3 H395.2 L392.5 43 Z" fill="#1a1a1a"/>
<path d="M447.8 40.3 H453.2 L450.5 43 Z" fill="#1a1a1a"/>
<path d="M884.5 33.3 L892 36.18 V44.82 L884.5 47.7 L877 44.82 V36.18 Z" fill="url(#cubeg)" stroke="#84c4e4" stroke-width="0.8"/>
<path d="M877 36.18 L884.5 39.06 L892 36.18 M884.5 39.06 V47.7" stroke="#a8d8ef" stroke-width="0.6" fill="none"/>
<text x="884.5" y="44.2" font-family="Liberation Serif" font-size="10.4" fill="#2a5aa0" text-anchor="middle">R</text>
<path d="M943.8 40 H949.2 L946.5 43 Z" fill="#1a1a1a"/>
<path d="M20.4 64.0 H28.9 L31.9 67.0 V76.75 H20.4 Z" fill="#fff" stroke="#b9bdc1" stroke-width="1"/>
<circle cx="22.4" cy="70.75" r="4.2" fill="#5b93d6"/>
<path d="M18.2 70.75 H26.6 M22.4 66.55 V74.95" stroke="#fff" stroke-width="0.9"/>
<path d="M128.8 64.0 H137.5 L140.5 67.0 V77.2 H128.8 Z" fill="#fff" stroke="#b9bdc1" stroke-width="1"/>
<rect x="125" y="68.2" width="13.8" height="7.5" fill="#1fb24a"/>
<text x="131.9" y="74.4" font-family="Liberation Sans" font-weight="bold" font-size="6" fill="#fff" text-anchor="middle" textLength="12" lengthAdjust="spacingAndGlyphs">YML</text>
<rect x="443.6" y="73.8" width="12.600000000000012" height="4.399999999999994" rx="0.6" fill="#fff" stroke="#6f7a7f" stroke-width="1.2"/>
<rect x="443" y="73.2" width="13.800000000000011" height="2" rx="0.6" fill="#6f7a7f"/>
<path d="M98.8 69.2 L103.8 74.2 M103.8 69.2 L98.8 74.2" stroke="#a4a7aa" stroke-width="1.5"/>
<path d="M212.8 69.2 L217.8 74.2 M217.8 69.2 L212.8 74.2" stroke="#a4a7aa" stroke-width="1.5"/>
<rect x="464.44000000000005" y="67.1" width="9.759999999999993" height="7.655999999999998" rx="0.6" fill="#e4e5e8" stroke="#6f7a7f" stroke-width="1.2"/>
<rect x="463.84000000000003" y="66.5" width="10.959999999999992" height="1.8" rx="0.6" fill="#6f7a7f"/>
<rect x="461.70000000000005" y="70.544" width="9.759999999999993" height="7.655999999999998" rx="0.6" fill="#e4e5e8" stroke="#6f7a7f" stroke-width="1.2"/>
<rect x="461.1" y="69.944" width="10.959999999999992" height="1.8" rx="0.6" fill="#6f7a7f"/>
<path d="M18 94.3 L25.5 88 V91.024 H33 V97.576 H25.5 V100.6 Z" fill="#e6e8ea" stroke="#b5babe" stroke-width="0.8" stroke-linejoin="round"/>
<path d="M50 94.3 L42.5 88 V91.024 H35 V97.576 H42.5 V100.6 Z" fill="#eceef0" stroke="#d6d9dc" stroke-width="0.8" stroke-linejoin="round"/>
<rect x="57" y="85.6" width="1" height="13.800000000000011" fill="#c8cdd0"/>
<rect x="69.5" y="88.5" width="10.5" height="10.8" rx="2" fill="#f4f7fa" stroke="#b8c2cb" stroke-width="0.9"/>
<path d="M70 89 H79.5 V91.5 H70 Z" fill="#c6daf0"/>
<path d="M65.5 99.3 L71 93.8 M68.5 93.8 H71.5 V96.8" stroke="#95a1ab" stroke-width="1.25" fill="none"/>
<rect x="88" y="85.6" width="1" height="13.800000000000011" fill="#c8cdd0"/>
<path d="M98 89 Q98 88 99 88 H108.5 L110.5 90 V99.6 Q110.5 100.6 109.5 100.6 H99 Q98 100.6 98 99.6 Z" fill="#c7ddf0"/>
<rect x="100.5" y="89.2" width="7.5" height="4.4099999999999975" fill="#eef5fb"/>
<rect x="101.125" y="95.812" width="6.25" height="4.787999999999998" fill="#eef5fb"/>
<rect x="103.25" y="96.82" width="1.7500000000000002" height="3.779999999999998" fill="#c7ddf0"/>
<rect x="122.6" y="87.75" width="11.5" height="11.5" rx="2.5" fill="#fff" stroke="#8d8f91" stroke-width="1"/>
<rect x="229" y="85.6" width="1" height="13.800000000000011" fill="#c8cdd0"/>
<text x="245.5" y="91.9" font-family="Liberation Serif" font-size="7.4" fill="#7d838a" text-anchor="middle" textLength="16" lengthAdjust="spacingAndGlyphs">ABC</text>
<path d="M241.9 96.8 L244.6 99.8 L250.3 93.2" stroke="#22a33a" stroke-width="1.6" fill="none"/>
<path d="M271.5 95.5 L276 100" stroke="#9a6a3e" stroke-width="2.6" stroke-linecap="round"/>
<circle cx="268.3" cy="92.3" r="4.6" fill="url(#glassg)" stroke="#7d8590" stroke-width="1.3"/>
<rect x="284" y="85.6" width="1" height="13.800000000000011" fill="#c8cdd0"/>
<path d="M299 88 L305.5 94 L299 100 Z" fill="#5a8fd6"/>
<rect x="290.5" y="90.6" width="3.6" height="3.3" rx="0.6" fill="#5a8fd6"/>
<rect x="294.8" y="90.6" width="3.6" height="3.3" rx="0.6" fill="#5a8fd6"/>
<rect x="290.5" y="94.6" width="3.6" height="3.3" rx="0.6" fill="#5a8fd6"/>
<rect x="294.8" y="94.6" width="3.6" height="3.3" rx="0.6" fill="#5a8fd6"/>
<rect x="298.6" y="90.6" width="2" height="7.3" fill="#5a8fd6"/>
<path d="M370.52 92.59 L372.30 92.78 L372.30 95.02 L370.52 95.21 L370.06 96.32 L371.19 97.71 L369.61 99.29 L368.22 98.16 L367.11 98.62 L366.92 100.40 L364.68 100.40 L364.49 98.62 L363.38 98.16 L361.99 99.29 L360.41 97.71 L361.54 96.32 L361.08 95.21 L359.30 95.02 L359.30 92.78 L361.08 92.59 L361.54 91.48 L360.41 90.09 L361.99 88.51 L363.38 89.64 L364.49 89.18 L364.68 87.40 L366.92 87.40 L367.11 89.18 L368.22 89.64 L369.61 88.51 L371.19 90.09 L370.06 91.48 Z" fill="#f6f8f9" stroke="#c2c7cb" stroke-width="0.9" stroke-linejoin="round"/><circle cx="365.8" cy="93.9" r="2" fill="#f1f5f6" stroke="#c2c7cb" stroke-width="0.9"/>
<path d="M380.8 93.2 H386 L383.4 95.8 Z" fill="#1a1a1a"/>
<rect x="397" y="88.5" width="11.6" height="12" rx="2" fill="#4fae5c"/>
<text x="402.9" y="98.6" font-family="Liberation Serif" font-size="9" fill="#fff" text-anchor="middle">C</text>
<circle cx="394.6" cy="90.3" r="3.9" fill="#fff"/>
<path d="M391.7 90.3 H397.5 M394.6 87.4 V93.2" stroke="#1c9e3e" stroke-width="1.8"/>
<rect x="414" y="85.6" width="1" height="13.800000000000011" fill="#c8cdd0"/>
<rect x="423" y="87.8" width="10.5" height="11" rx="1.5" fill="#fff" stroke="#cfd3d6" stroke-width="0.8"/>
<rect x="424.5" y="92.6" width="6" height="1.8" fill="#8db4e2"/>
<path d="M430.5 92.4 H435.5 V89.5 L440.8 93.5 L435.5 97.5 V94.6 H430.5 Z" fill="#14a04a"/>
<path d="M470.8 93.2 H476 L473.4 95.8 Z" fill="#1a1a1a"/>
<rect x="128" y="108.6" width="1" height="14.100000000000009" fill="#c8cdd0"/>
<rect x="209" y="108.6" width="1" height="14.100000000000009" fill="#c8cdd0"/>
<rect x="287" y="108.6" width="1" height="14.100000000000009" fill="#c8cdd0"/>
<rect x="353" y="108.6" width="1" height="14.100000000000009" fill="#c8cdd0"/>
<rect x="413" y="108.6" width="1" height="14.100000000000009" fill="#c8cdd0"/>
<path d="M264.2 115.6 H269.2 L266.7 118.3 Z" fill="#333"/>
<path d="M340.2 115.6 H345.2 L342.7 118.3 Z" fill="#333"/>
<path d="M400.3 115.6 H405.3 L402.8 118.3 Z" fill="#333"/>
<path d="M458.2 115.6 H463.2 L460.7 118.3 Z" fill="#333"/>
<path d="M172.6 112.9 L169.2 120.3 M170.4 112.9 H174.4 M167.3 120.3 H171.3" stroke="#b9c1cc" stroke-width="1.1" fill="none"/>
<rect x="477" y="112.3" width="7" height="0.9" fill="#9aa3a8"/>
<rect x="475" y="114.3" width="9" height="0.9" fill="#9aa3a8"/>
<rect x="477" y="116.3" width="7" height="0.9" fill="#9aa3a8"/>
<rect x="475" y="118.3" width="9" height="0.9" fill="#9aa3a8"/>
<path d="M78 634.4 L80.6 631.5 L83.2 634.4 Z M78 635.9 L80.6 638.8 L83.2 635.9 Z" fill="#555d63"/>
<path d="M473 634.4 L475.6 631.5 L478.2 634.4 Z M473 635.9 L475.6 638.8 L478.2 635.9 Z" fill="#555d63"/>
<rect x="446.34000000000003" y="658.0" width="9.759999999999993" height="7.5840000000000325" rx="0.6" fill="#e4e5e8" stroke="#6f7a7f" stroke-width="1.2"/>
<rect x="445.74" y="657.4" width="10.959999999999992" height="1.8" rx="0.6" fill="#6f7a7f"/>
<rect x="443.6" y="661.416" width="9.759999999999993" height="7.5840000000000325" rx="0.6" fill="#e4e5e8" stroke="#6f7a7f" stroke-width="1.2"/>
<rect x="443" y="660.816" width="10.959999999999992" height="1.8" rx="0.6" fill="#6f7a7f"/>
<rect x="461.8" y="658.8000000000001" width="12.600000000000012" height="10.199999999999978" rx="0.6" fill="#e4e5e8" stroke="#6f7a7f" stroke-width="1.2"/>
<rect x="461.2" y="658.2" width="13.800000000000011" height="2.2" rx="0.6" fill="#6f7a7f"/>
<rect x="910.44" y="67.3" width="9.759999999999946" height="7.511999999999996" rx="0.6" fill="#e4e5e8" stroke="#6f7a7f" stroke-width="1.2"/>
<rect x="909.84" y="66.7" width="10.959999999999946" height="1.8" rx="0.6" fill="#6f7a7f"/>
<rect x="907.7" y="70.68799999999999" width="9.759999999999946" height="7.511999999999996" rx="0.6" fill="#e4e5e8" stroke="#6f7a7f" stroke-width="1.2"/>
<rect x="907.1" y="70.088" width="10.959999999999946" height="1.8" rx="0.6" fill="#6f7a7f"/>
<rect x="925.6" y="68.0" width="12.699999999999978" height="10.199999999999992" rx="0.6" fill="#e4e5e8" stroke="#6f7a7f" stroke-width="1.2"/>
<rect x="925" y="67.4" width="13.899999999999977" height="2.2" rx="0.6" fill="#6f7a7f"/>
<rect x="907.7" y="107.6" width="12.499999999999932" height="4.399999999999994" rx="0.6" fill="#fff" stroke="#6f7a7f" stroke-width="1.2"/>
<rect x="907.1" y="107" width="13.699999999999932" height="2" rx="0.6" fill="#6f7a7f"/>
<rect x="928.3" y="101.3" width="10.000000000000002" height="7.367999999999994" rx="0.6" fill="#e4e5e8" stroke="#6f7a7f" stroke-width="1.2"/>
<rect x="927.6999999999999" y="100.7" width="11.200000000000001" height="1.8" rx="0.6" fill="#6f7a7f"/>
<rect x="925.5" y="104.63199999999999" width="10.000000000000002" height="7.367999999999994" rx="0.6" fill="#e4e5e8" stroke="#6f7a7f" stroke-width="1.2"/>
<rect x="924.9" y="104.032" width="11.200000000000001" height="1.8" rx="0.6" fill="#6f7a7f"/>
<path d="M500.1 128.4 L507.5 121.4 V124.76 H514.9 V132.04 H507.5 V135.4 Z" fill="#a9d0ee" stroke="#7fb4dd" stroke-width="0.8" stroke-linejoin="round"/>
<path d="M540.7 128.4 L533.3 121.4 V124.76 H525.9 V132.04 H533.3 V135.4 Z" fill="#a9d0ee" stroke="#7fb4dd" stroke-width="0.8" stroke-linejoin="round"/>
<rect x="547" y="119.6" width="1" height="13.800000000000011" fill="#c8cdd0"/>
<path d="M560.2 122.8 H570.79 L570.3 122.31 V133.8 H560.2 Z" fill="#fff" stroke="#d3d6d9" stroke-width="1"/>
<circle cx="558.6" cy="125.8" r="5" fill="#c4222b" stroke="#9d1b22" stroke-width="0.6"/>
<path d="M556.3 123.5 L560.9 128.1 M560.9 123.5 L556.3 128.1" stroke="#fff" stroke-width="1.6"/>
<rect x="578" y="119.6" width="1" height="13.800000000000011" fill="#c8cdd0"/>
<rect x="590.5" y="122.4" width="10.8" height="11" rx="2" fill="#f4f7fa" stroke="#b8c2cb" stroke-width="0.9"/>
<path d="M591 122.9 H600.8 V125.5 H591 Z" fill="#c6daf0"/>
<path d="M586.7 133.5 L592.2 128 M589.7 128 H592.7 V131" stroke="#95a1ab" stroke-width="1.25" fill="none"/>
<rect x="609" y="119.6" width="1" height="13.800000000000011" fill="#c8cdd0"/>
<path d="M619.8 123.0 H630.89 L630.4 122.51 V133.9 H619.8 Z" fill="#fff" stroke="#d3d6d9" stroke-width="1"/>
<path d="M626.3 133.5 L634.2 123.2" stroke="#e3a83a" stroke-width="2"/>
<path d="M633.4 124.2 L635 122" stroke="#d8403a" stroke-width="2"/>
<rect x="674.8" y="121.9" width="11.3" height="11.3" rx="2.5" fill="#fff" stroke="#8d8f91" stroke-width="1"/>
<circle cx="893.5" cy="128.3" r="2.3" fill="#1f86d8"/>
<path d="M886.2 127.5 Q887.5 127.2 888.5 127.5 Q889.8 123 894 123 Q897 123 898.3 125.2" stroke="#1f86d8" stroke-width="1.8" fill="none" stroke-linecap="round"/>
<path d="M901.8 129.2 Q900.5 129.5 899.5 129.2 Q898.2 133.6 894 133.6 Q891 133.6 889.7 131.4" stroke="#1f86d8" stroke-width="1.8" fill="none" stroke-linecap="round"/>
<path d="M908.1 127.3 H913 L910.55 130 Z" fill="#1a1a1a"/>
<rect x="921" y="119.4" width="1" height="14.699999999999989" fill="#c8cdd0"/>
<path d="M941 129.5 A6.2 6.2 0 1 1 938.6 122.6" stroke="#bcc6cf" stroke-width="3.8" fill="none"/>
<path d="M942.6 119.4 L943.2 127 L935.8 125.6 Z" fill="#e9eff4" stroke="#bcc6cf" stroke-width="0.9" stroke-linejoin="round"/>
<path d="M941 129.5 A6.2 6.2 0 1 1 938.6 122.6" stroke="#eaf0f5" stroke-width="2" fill="none"/>
</svg>
</body></html>
